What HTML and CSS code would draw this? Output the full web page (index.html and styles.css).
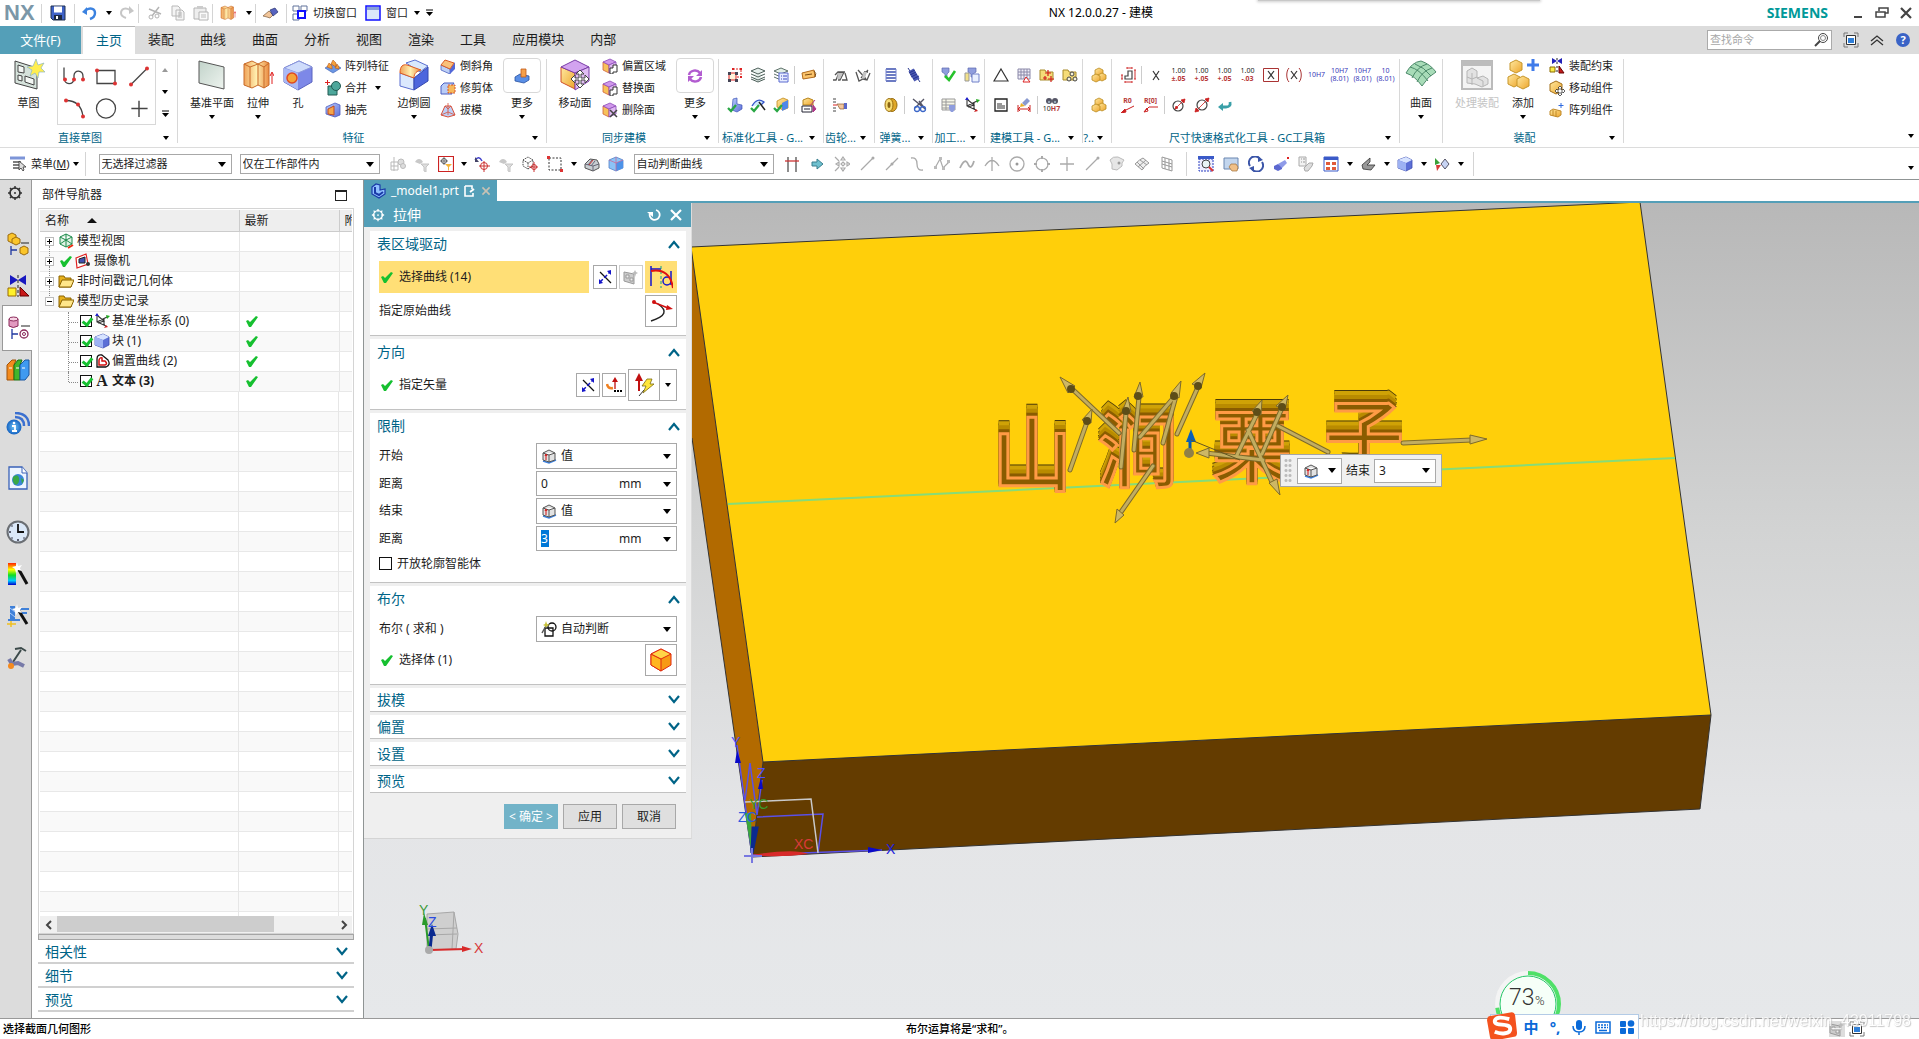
FILE: index.html
```html
<!DOCTYPE html>
<html lang="zh-CN">
<head>
<meta charset="utf-8">
<title>NX 12.0.0.27 - 建模</title>
<link rel="stylesheet" href="styles.css">
</head>
<body>
<svg class="sprite" aria-hidden="true">
<defs>
<linearGradient id="gBlue" x1="0" y1="0" x2="1" y2="1"><stop offset="0" stop-color="#b9cdfb"/><stop offset="1" stop-color="#5f6fd8"/></linearGradient>
<linearGradient id="gGold" x1="0" y1="0" x2="1" y2="1"><stop offset="0" stop-color="#ffe9a0"/><stop offset="1" stop-color="#eda52c"/></linearGradient>
<linearGradient id="gOr" x1="0" y1="0" x2="1" y2="0"><stop offset="0" stop-color="#f0a35a"/><stop offset=".5" stop-color="#fff0b0"/><stop offset="1" stop-color="#ea8a40"/></linearGradient>
<linearGradient id="gRain" x1="0" y1="0" x2="0" y2="1"><stop offset="0" stop-color="#f20"/><stop offset=".3" stop-color="#ff0"/><stop offset=".55" stop-color="#1d2"/><stop offset=".8" stop-color="#0cf"/><stop offset="1" stop-color="#00c"/></linearGradient>
<linearGradient id="gPlane" x1="0" y1="0" x2="1" y2="1"><stop offset="0" stop-color="#c2d3ca"/><stop offset="1" stop-color="#eef4ef"/></linearGradient>
<radialGradient id="gInfo"><stop offset="0" stop-color="#6fc4f5"/><stop offset="1" stop-color="#1563c2"/></radialGradient>
</defs>
<symbol id="save" viewBox="0 0 16 16"><path d="M1 1h14v14H3l-2-2z" fill="#3f62c8" stroke="#20304f"/><path d="M4 1.500h8v6H4z" fill="#fff"/><path d="M4 10h8v5H4z" fill="#1b2740"/><path d="M6 11h2v3H6z" fill="#fff"/></symbol>
<symbol id="undo" viewBox="0 0 16 16"><path d="M5 5c5-3 9-1 9 3 0 3-2 5-5 6" fill="none" stroke="#3b82e0" stroke-width="2.400"/><path d="M6 2v8L1 7z" fill="#3b82e0"/></symbol>
<symbol id="redo" viewBox="0 0 16 16"><path d="M11 5C6 2 2 4 2 8c0 3 2 4 5 5" fill="none" stroke="#c6c6c6" stroke-width="2"/><path d="M10 1v8l5-3z" fill="#c6c6c6"/></symbol>
<symbol id="cut" viewBox="0 0 16 16"><path d="M2 4l12 5M12 2L5 11" stroke="#b4b4b4" stroke-width="1.500" fill="none"/><circle cx="4" cy="12" r="2" fill="none" stroke="#b4b4b4"/><circle cx="10" cy="11" r="2" fill="none" stroke="#b4b4b4"/></symbol>
<symbol id="copy" viewBox="0 0 16 16"><path d="M2 1h6l2 2v8H2zM6 5h6l2 2v8H6z" fill="#f4f4f4" stroke="#b8b8b8"/><path d="M8 8h4M8 10h4M8 12h4" stroke="#b8b8b8"/></symbol>
<symbol id="paste" viewBox="0 0 16 16"><path d="M1 3h12v11H1z" fill="#eee" stroke="#b4b4b4"/><path d="M4 1h6v3H4z" fill="#ccc"/><path d="M6 7h9v8H6z" fill="#fafafa" stroke="#b4b4b4"/><path d="M8 10h5M8 12h5" stroke="#bbb"/></symbol>
<symbol id="extrude" viewBox="0 0 32 32"><path d="M2 5l8-3 6 3 6-3 5 2v22l-5 3-6-3-6 3-8-3z" fill="url(#gOr)" stroke="#c86a28"/><path d="M2 5l6 3 8-3 6 3 5-4M8 8v20M16 5v21M22 8v21" stroke="#c86a28" fill="none"/><path d="M30 25V14M28 17l2-4 2 4" stroke="#e02020" fill="none"/></symbol>
<symbol id="brush" viewBox="0 0 16 16"><path d="M0 11l6-5 4 4-3 3-3-1z" fill="#f2c69a" stroke="#7d5a3a" stroke-width=".7"/><path d="M7 5l5-2 3 4-5 4z" fill="#5763c0" stroke="#26306d" stroke-width=".7"/></symbol>
<symbol id="switchwin" viewBox="0 0 16 16"><path d="M1 1h6v5H1zM9 1h6v5H9zM1 9h6v6H1z" fill="#fff" stroke="#60739b"/><path d="M6 6h7v7H6z" fill="#fff" stroke="#1010ff" stroke-width="2"/></symbol>
<symbol id="win" viewBox="0 0 16 16"><path d="M1 1h14v14H1z" fill="#dce8fa" stroke="#1010ff" stroke-width="1.500"/><path d="M2 2h12v3H2z" fill="#88a0d8"/></symbol>
<symbol id="more" viewBox="0 0 9 8"><path d="M1 1h7" stroke="#000"/><path d="M1 3h7L4.500 7z"/></symbol>
<symbol id="mini" viewBox="0 0 14 14"><path d="M3 11h8" stroke="#444" stroke-width="2"/></symbol>
<symbol id="restore" viewBox="0 0 14 14"><path d="M4 5V2h9v5h-3" fill="none" stroke="#444" stroke-width="1.500"/><path d="M1 6h9v5H1z" fill="none" stroke="#444" stroke-width="1.500"/></symbol>
<symbol id="close" viewBox="0 0 14 14"><path d="M2 2l10 10M12 2L2 12" stroke="currentColor" stroke-width="2.200"/></symbol>
<symbol id="find" viewBox="0 0 16 16"><circle cx="10" cy="6" r="4.500" fill="#fff" stroke="#444"/><circle cx="10" cy="6" r="2.500" fill="none" stroke="#888"/><path d="M7 9l-5 5" stroke="#444" stroke-width="2"/></symbol>
<symbol id="full" viewBox="0 0 16 16"><path d="M1 5V1h4M11 1h4v4M15 11v4h-4M5 15H1v-4" fill="none" stroke="#777"/><path d="M3.500 3.500h9v9h-9z" fill="#fff" stroke="#333"/><path d="M5 6h6v5H5z" fill="#2f7fd8"/></symbol>
<symbol id="chev2" viewBox="0 0 16 16"><path d="M2 9l6-5 6 5M2 13l6-5 6 5" fill="none" stroke="#333" stroke-width="1.300"/></symbol>
<symbol id="sketch" viewBox="0 0 32 32"><path d="M2 2l22 7v21L2 24z" fill="#d5e2db" stroke="#444"/><path d="M5 6l6 2v6l-6-1zM5 16l4 1v5l-4-1zM12 17l9 3v6l-9-3z" fill="#f3f7f4" stroke="#444"/><path d="M23 0l2 6 6-2-3 5 4 4-6 0-1 6-3-5-5 3 2-6-5-3 6-1z" fill="#ffee50" stroke="#8db6c4" stroke-width=".7"/></symbol>
<symbol id="g1" viewBox="0 0 22 20"><path d="M1 1v10c0 8 10 8 10 1V9c0-6 9-6 9 1v3" fill="none" stroke="#444" stroke-width="1.300"/><circle cx="2" cy="13" r="2" fill="#d33"/><circle cx="11" cy="13" r="2" fill="#d33"/><circle cx="20" cy="13" r="2" fill="#d33"/></symbol>
<symbol id="g2" viewBox="0 0 22 20"><path d="M2 4h18v13H2z" fill="none" stroke="#444" stroke-width="1.300"/><circle cx="2" cy="4" r="2" fill="#d33"/><circle cx="20" cy="17" r="2" fill="#d33"/></symbol>
<symbol id="g3" viewBox="0 0 22 20"><path d="M3 18L19 2" stroke="#444" stroke-width="1.300"/><circle cx="3" cy="18" r="2" fill="#d33"/><circle cx="19" cy="2" r="2" fill="#d33"/></symbol>
<symbol id="g4" viewBox="0 0 22 20"><path d="M3 2q15 0 17 16" fill="none" stroke="#444" stroke-width="1.300"/><circle cx="3" cy="2" r="2" fill="#d33"/><circle cx="15" cy="6" r="2" fill="#d33"/><circle cx="20" cy="18" r="2" fill="#d33"/></symbol>
<symbol id="g5" viewBox="0 0 22 22"><circle cx="11" cy="11" r="10" fill="none" stroke="#444" stroke-width="1.300"/></symbol>
<symbol id="g6" viewBox="0 0 22 22"><path d="M11 3v17M3 11h17" stroke="#444" stroke-width="1.500"/></symbol>
<symbol id="plane" viewBox="0 0 32 32"><path d="M3 2l25 6v22L3 24z" fill="url(#gPlane)" stroke="#555"/></symbol>
<symbol id="hole" viewBox="0 0 32 32"><path d="M2 9l15-7 13 6v15l-14 8L2 23z" fill="#7d88e8" stroke="#5a64c0"/><path d="M2 9l15-7 13 6-14 6z" fill="#cfdcfb" stroke="#8a96dc"/><path d="M2 9l14 5v17L2 23z" fill="#aab9f5"/><circle cx="10" cy="19" r="5" fill="#f5a43a" stroke="#e04a20" stroke-width="1.500"/></symbol>
<symbol id="cube" viewBox="0 0 16 16"><path d="M1 4l8-3 6 3v8l-6 3-8-3z" fill="#5c6fd6" stroke="#3c4db0" stroke-width=".8"/><path d="M1 4l8-3 6 3-6 3z" fill="#d8e4ff"/><path d="M1 4l8 3v8l-8-3z" fill="#9db2f3"/></symbol>
<symbol id="pattern" viewBox="0 0 16 16"><path d="M0 10l8-5 8 5-8 5z" fill="#6b96e4" stroke="#3a5eb0" stroke-width=".6"/><path d="M2 9l2-4 3 3v3zM6 6l2-4 3 3v4zM10 10l2-4 2 3v2z" fill="#f5a03a" stroke="#b5581a" stroke-width=".6"/></symbol>
<symbol id="unite" viewBox="0 0 16 16"><path d="M3 6h9v9H3z" fill="#4da79b" stroke="#225a52"/><circle cx="11" cy="6" r="4.500" fill="#4da79b" stroke="#225a52"/><path d="M2.500 0v5M0 2.500h5" stroke="#d22"/></symbol>
<symbol id="shell" viewBox="0 0 16 16"><path d="M1 5l9-4 5 2v10l-5 2-9-3z" fill="url(#gBlue)" stroke="#4a5cc0" stroke-width=".8"/><path d="M3 7l6-3v9l-6-1z" fill="#f3a64a" stroke="#c24a1e"/></symbol>
<symbol id="blend" viewBox="0 0 32 32"><path d="M2 14l14 5v12L2 27z" fill="#dbe9fd" stroke="#5a6fd0"/><path d="M16 19l14-11v14l-14 9z" fill="#4d66dd" stroke="#3448ae"/><path d="M8 4l9-3 13 6-8 6z" fill="#d8e8fc" stroke="#5a6fd0"/><path d="M2 14c0-7 3-9 7-8l14 5c-4 1-7 3-7 8z" fill="url(#gOr)" stroke="#e05a20"/></symbol>
<symbol id="chamfer" viewBox="0 0 16 16"><path d="M1 7l9 4v5l-9-4z" fill="#bdd0f7" stroke="#4a5fc0" stroke-width=".8"/><path d="M10 11l5-7v7l-5 5z" fill="#5268d8"/><path d="M1 7l4-5 9 3-4 6z" fill="#f8c07a" stroke="#d85a28"/></symbol>
<symbol id="trim" viewBox="0 0 16 16"><path d="M1 6l3-3h10l-2 3v8H1z" fill="#b9ccf7" stroke="#4a5fc0"/><path d="M8 5h7v8H8z" fill="#f6b95c" stroke="#d8552a" stroke-dasharray="2 1"/></symbol>
<symbol id="draft" viewBox="0 0 16 16"><path d="M5 4h6l4 9-7 2-7-2z" fill="#bdd0f7" stroke="#d8503a"/><path d="M8 1v12M5 4l3 3 3-3M1 13l7-3 7 3" fill="none" stroke="#d8503a" stroke-width=".8"/></symbol>
<symbol id="stamp" viewBox="0 0 16 16"><path d="M1 9l5-3 9 2v4l-5 3-9-2z" fill="#5a8fe6" stroke="#27509f" stroke-width=".8"/><path d="M7 1h5v8H7z" fill="#f6a04a" stroke="#c25a1a" stroke-width=".8"/></symbol>
<symbol id="moveface" viewBox="0 0 32 32"><path d="M2 8l14 6v16L2 23z" fill="url(#gGold)" stroke="#d0502a"/><path d="M2 8l14-7 14 7-14 6z" fill="#d2a3ef" stroke="#7a3da8"/><path d="M16 14l14-6v14l-14 9z" fill="#e0bdf3" stroke="#7a3da8"/><path d="M21 11l4 4h-3v4h4v-3l4 4-4 4v-3h-4v4h3l-4 4-4-4h3v-4h-4v3l-4-4 4-4v3h4v-4h-3z" fill="#fff" stroke="#444"/></symbol>
<symbol id="face" viewBox="0 0 16 16"><path d="M1 4l6 3v8l-6-3z" fill="#f7c25a" stroke="#d0603a" stroke-width=".8"/><path d="M1 4l7-3 6 3-7 3z" fill="#cf97ea" stroke="#8b4ab8" stroke-width=".8"/><path d="M7 7l7-3v8l-7 3z" fill="#dfb8f2" stroke="#8b4ab8" stroke-width=".8"/><path d="M8 10h3V7h4v7h-4v2H8z" fill="#fff" stroke="#333"/></symbol>
<symbol id="delface" viewBox="0 0 16 16"><path d="M1 4l6 3v8l-6-3z" fill="#f7c25a" stroke="#d0603a" stroke-width=".8"/><path d="M1 4l7-3 6 3-7 3z" fill="#cf97ea" stroke="#8b4ab8" stroke-width=".8"/><path d="M7 7l7-3v8l-7 3z" fill="#dfb8f2" stroke="#8b4ab8" stroke-width=".8"/><path d="M8 8l7 7M15 8l-7 7" stroke="#444" stroke-width="1.500"/></symbol>
<symbol id="swap" viewBox="0 0 16 16"><path d="M2 7c1-5 8-6 11-2M14 9c-1 5-8 6-11 2" fill="none" stroke="#b25cd0" stroke-width="2.500"/><path d="M15 2v6H9zM1 14V8h6z" fill="#b25cd0"/></symbol>
<symbol id="attr" viewBox="0 0 16 16"><path d="M2 6h7v7H2z" fill="#fff3dc" stroke="#d22"/><path d="M6 2h8v8H9" fill="none" stroke="#d22" stroke-dasharray="2 1"/><path d="M1 5h3v3H1zM8 5h3v3H8zM1 12h3v3H1zM8 12h3v3H8z" fill="#445"/><path d="M5 1h2v2H5zM13 1h2v2h-2zM13 9h2v2h-2z" fill="#d22"/></symbol>
<symbol id="layers" viewBox="0 0 16 16"><path d="M1 4l7-3 7 3-7 3zM1 7l7 3 7-3M1 10l7 3 7-3M1 12l7 3 7-3" fill="#e6f0ec" stroke="#4d5f5a"/></symbol>
<symbol id="layerlist" viewBox="0 0 16 16"><path d="M1 4l7-3 7 3-7 3zM1 7l7 3M1 10l7 3" fill="#e2efe6" stroke="#5d706a"/><path d="M6 6h9v9H6z" fill="#e7edff" stroke="#5b6bd0"/><path d="M8 9h1M8 12h1M10 9h4M10 12h4" stroke="#3b4bc0"/></symbol>
<symbol id="tag" viewBox="0 0 16 16"><path d="M1 6l12-3 1 7-12 2z" fill="#fbc36a" stroke="#b06a1c"/><path d="M4 8l7-1M13 4q3 2 1 6" stroke="#7a4a10" fill="none"/></symbol>
<symbol id="partok" viewBox="0 0 16 16"><path d="M6 2l4-1v6l5 1v4l-5 3-5-2z" fill="url(#gBlue)" stroke="#3e55b8" stroke-width=".7"/><path d="M1 11l3 3 5-6" fill="none" stroke="#29a745" stroke-width="2.300"/></symbol>
<symbol id="curveok" viewBox="0 0 16 16"><path d="M2 9q5-9 12-4l-3 3" fill="#cfe9ff" stroke="#3656c8" stroke-width="1.300"/><path d="M9 5l6 8" stroke="#222" stroke-width="1.500"/><path d="M1 11l3 3 5-6" fill="none" stroke="#29a745" stroke-width="2.300"/></symbol>
<symbol id="goldok" viewBox="0 0 16 16"><path d="M4 4l6-3 5 2v8l-5 2-6-3z" fill="url(#gGold)" stroke="#c08a1c" stroke-width=".8"/><path d="M9 6l6-3v8l-6 3z" fill="#4f86e8"/><path d="M1 11l3 3 5-6" fill="none" stroke="#29a745" stroke-width="2.300"/></symbol>
<symbol id="goldpen" viewBox="0 0 16 16"><path d="M2 3l5-2 5 2v5H2z" fill="url(#gGold)" stroke="#b8841a"/><path d="M1 9h10v6H1z" fill="#fff" stroke="#223"/><path d="M3 12h6" stroke="#223"/><path d="M14 3L9 9M12 8l3 4-3 3z" stroke="#b0388a" fill="#b0388a"/></symbol>
<symbol id="gear2" viewBox="0 0 16 16"><path d="M1 13h3l3-7h5M6 13h2l4-8M3 8l3-3h7M10 13h5l-2-7" fill="none" stroke="#555" stroke-width="1.300"/><path d="M6 6h5l-3 6H5z" fill="#c4c4c4"/></symbol>
<symbol id="gear3" viewBox="0 0 16 16"><path d="M1 5l3 9 4-2 4 1 3-7M3 3l8 9M13 3l-7 8M9 5h4" fill="none" stroke="#555" stroke-width="1.300"/><path d="M8 5h4l-2 6H7z" fill="#c4c4c4"/></symbol>
<symbol id="gearhand" viewBox="0 0 16 16"><path d="M1 2h3M1 5h3M1 11h3M1 14h3" stroke="#444"/><path d="M1 8h4" stroke="#d22"/><path d="M5 7h7v5H8z" fill="#f3c79c" stroke="#8a5a34" stroke-width=".7"/><path d="M12 6h3v6h-3z" fill="#5b68c8"/></symbol>
<symbol id="coil" viewBox="0 0 16 16"><path d="M3 2h10M3 5h10M3 8h10M3 11h10M3 14h10" stroke="#3c50b0" stroke-width="1.700"/><path d="M3 2v12M13 2v12" stroke="#7a88d0"/></symbol>
<symbol id="coil2" viewBox="0 0 16 16"><path d="M5 3l6 10" stroke="#4a58b4" stroke-width="6"/><path d="M3 6l6-3M4 8l6-3M5 10l6-3M7 12l6-3" stroke="#27358c"/><path d="M2 1l2 3M12 12l2 3" stroke="#27358c"/></symbol>
<symbol id="bobbin" viewBox="0 0 16 16"><ellipse cx="9" cy="8" rx="5" ry="6.500" fill="#e0a92a" stroke="#9a6e10"/><ellipse cx="6" cy="8" rx="4" ry="6.500" fill="#f7dc72" stroke="#9a6e10"/><ellipse cx="6" cy="8" rx="1.500" ry="3" fill="#8a6412"/></symbol>
<symbol id="springcut" viewBox="0 0 16 16"><path d="M2 2l11 9M13 2L4 11M8 4l6 8" stroke="#556" stroke-width="1.400"/><circle cx="12" cy="12" r="2.500" fill="none" stroke="#3a66c8" stroke-width="1.300"/><circle cx="6" cy="12" r="2.500" fill="none" stroke="#3a66c8" stroke-width="1.300"/></symbol>
<symbol id="toolok" viewBox="0 0 16 16"><path d="M1 1h7v4L6 7v3H4V7L1 5z" fill="#8f9ddd" stroke="#5b67b0" stroke-width=".7"/><path d="M4 9l4 4 6-9" fill="none" stroke="#27c22c" stroke-width="2.600"/></symbol>
<symbol id="tooldoc" viewBox="0 0 16 16"><path d="M4 1h8v4l-3 2v3H7V7L4 5z" fill="#8f9ddd" stroke="#5b67b0" stroke-width=".7"/><path d="M8 7h7v8H8z" fill="#eaf0ff" stroke="#7080c8"/><path d="M1 6h4v8H1z" fill="#f3e28a" stroke="#999"/></symbol>
<symbol id="tablex" viewBox="0 0 16 16"><path d="M1 2h13v11H1zM1 5h13M1 8h13M1 11h13M5 2v11" fill="#f6f6e8" stroke="#999"/><path d="M8 8h6v4l-2 3h-2l-2-3z" fill="#8f9ddd"/></symbol>
<symbol id="csys" viewBox="0 0 16 16"><path d="M3 1v8l9 4M3 9l10-5M4 3l6 5-6 2M10 5v7" fill="none" stroke="#333" stroke-width="1.100"/><path d="M1 3l2-3 2 3z" fill="#22c"/><path d="M12 2l4 1-3 3z" fill="#2a2"/><path d="M10 15l4-1-2-2z" fill="#c22"/></symbol>
<symbol id="tri" viewBox="0 0 16 16"><path d="M8 2l7 12H1z" fill="none" stroke="#333" stroke-width="1.200"/></symbol>
<symbol id="tabletri" viewBox="0 0 16 16"><path d="M2 2h12v10H2zM2 5h12M2 8h12M5 2v10M8 2v10M11 2v10" fill="#f0eff8" stroke="#8a88a8"/><path d="M10 10l4 5H7z" fill="#fff" stroke="#d22"/></symbol>
<symbol id="foldplus" viewBox="0 0 16 16"><path d="M1 3h5l1 2h7v8H1z" fill="#f5dc78" stroke="#a88a2a"/><path d="M9 3v6M6 6h6M12 9v6M9 12h6M6 9v4M4 11h4" stroke="#d32020" stroke-width="1.200"/></symbol>
<symbol id="foldring" viewBox="0 0 16 16"><path d="M1 3h5l1 2h7v8H1z" fill="#f5dc78" stroke="#a88a2a"/><g fill="#f5f1d8" stroke="#444"><circle cx="10" cy="7" r="2"/><circle cx="7" cy="12" r="2"/><circle cx="13" cy="12" r="2"/></g></symbol>
<symbol id="doclines" viewBox="0 0 16 16"><path d="M2 2h12v12H2z" fill="#fff" stroke="#222" stroke-width="1.300"/><path d="M4 7h5M4 9h8M4 11h8" stroke="#333"/></symbol>
<symbol id="dimbrush" viewBox="0 0 16 16"><path d="M2 8V15M14 8v7M2 12h12M4 10l-2 2 2 2M12 10l2 2-2 2" stroke="#c22" fill="none"/><path d="M6 6l5-5 3 3-5 5z" fill="#8a9ad0"/><path d="M5 6l4 3-5 1z" fill="#e8b02a"/></symbol>
<symbol id="golds" viewBox="0 0 16 16"><g fill="url(#gGold)" stroke="#b98a20" stroke-width=".8"><path d="M4 3l4-2 4 2v5H4z"/><path d="M7 8l4-2 4 2v4l-4 2-4-2z"/><path d="M1 9l4-2 4 2v4l-4 2-4-2z"/></g></symbol>
<symbol id="dimstep" viewBox="0 0 16 16"><path d="M5 12V9h3V4h4v8z" fill="none" stroke="#444" stroke-width="1.200"/><path d="M2 8v4M1 8h2M1 12h2M15 3v9M14 3h2M14 12h2M5 15h7M5 14v2M12 14v2M7 1h5M7 0v2M12 0v2" stroke="#d03030"/></symbol>
<symbol id="xx" viewBox="0 0 16 16"><path d="M5 4l6 9M11 4l-6 9" stroke="#333" stroke-width="1.200"/></symbol>
<symbol id="xbox" viewBox="0 0 16 16"><path d="M.5 1.500h15v13H.5z" fill="none" stroke="#a33"/><path d="M5 4l6 8M11 4l-6 8" stroke="#333" stroke-width="1.200"/></symbol>
<symbol id="xpar" viewBox="0 0 16 16"><path d="M3 1C0 4 0 12 3 15M13 1c3 3 3 11 0 14" fill="none" stroke="#a33"/><path d="M5 4l6 8M11 4l-6 8" stroke="#333" stroke-width="1.200"/></symbol>
<symbol id="dia" viewBox="0 0 16 16"><circle cx="7" cy="9" r="5" fill="none" stroke="#444" stroke-width="1.200"/><path d="M4 12L14 2M14 2l-4 1 3 3zM4 12l1-3 2 2z" stroke="#c22" stroke-width=".8" fill="#c22"/></symbol>
<symbol id="dia2" viewBox="0 0 16 16"><circle cx="8" cy="8" r="5" fill="none" stroke="#444" stroke-width="1.200"/><path d="M1 15L15 1M15 1l-4 1 3 3zM1 15l1-4 3 3z" stroke="#c22" stroke-width=".8" fill="#c22"/></symbol>
<symbol id="ret" viewBox="0 0 16 16"><path d="M13 5q1 5-4 5H5" fill="none" stroke="#3aa0a8" stroke-width="2.800"/><path d="M6 6v8L1 10z" fill="#3aa0a8"/></symbol>
<symbol id="surface" viewBox="0 0 32 32"><path d="M1 14Q7 3 16 2q9 3 15 11-8 4-14 14Q10 17 1 14z" fill="#a8dcb8" stroke="#4c8a6a"/><path d="M5 8q9 2 18 14M10 5q9 3 16 12M7 19Q12 8 22 5M12 23Q17 12 27 9" fill="none" stroke="#4c8a6a"/></symbol>
<symbol id="procasm" viewBox="0 0 32 32"><path d="M1 2h30v28H1z" fill="#f4f4f4" stroke="#bbb" stroke-width="2"/><path d="M1 2h30v5H1z" fill="#bdbdbd"/><path d="M6 12l5-3 5 3v7l6-2 5 3v5l-6 3-7-3-8-1z" fill="#e2e2e2" stroke="#b5b5b5"/><path d="M6 18l5 2 5-2M11 14v12M16 19l6 3v5" fill="none" stroke="#b5b5b5"/></symbol>
<symbol id="add" viewBox="0 0 32 32"><g fill="url(#gGold)" stroke="#c7962a"><path d="M3 4l6-3 6 3v7l-6 3-6-3z"/><path d="M1 18l6-3 6 3v7l-6 3-6-3z"/><path d="M10 20l6-3 6 3v7l-6 3-6-3z"/></g><path d="M26 0v12M20 6h12" stroke="#3f7bea" stroke-width="3"/></symbol>
<symbol id="constrain" viewBox="0 0 16 16"><path d="M3 0l5 3-5 3zM13 0L8 3l5 3z" fill="#2222b8"/><path d="M8 0v16" stroke="#222" stroke-dasharray="2 2"/><path d="M1 9h5v5H1z" fill="#f8ec4a" stroke="#8a6a00"/><path d="M10 8l5 7h-5z" fill="#c41c1c" stroke="#600"/></symbol>
<symbol id="movecomp" viewBox="0 0 16 16"><path d="M1 4l6-3 6 3v7l-6 3-6-3z" fill="url(#gGold)" stroke="#a5701a"/><path d="M11 6l2 2h-1v2h2V9l2 2-2 2v-1h-2v2h1l-2 2-2-2h1v-2H8v1l-2-2 2-2v1h2V8H9z" fill="#fff" stroke="#222" stroke-width=".7"/></symbol>
<symbol id="patcomp" viewBox="0 0 16 16"><path d="M1 9l3-2 8 2v4l-3 2-8-2z" fill="url(#gGold)" stroke="#c08a2a"/><path d="M4 8v6M7 9v6" stroke="#c08a2a"/><path d="M12 1v5M9.500 3.500h5" stroke="#2f6ae0"/></symbol>
<symbol id="menu" viewBox="0 0 16 16"><path d="M0 2h15" stroke="#7d95d8" stroke-width="3"/><path d="M3 6h8M3 9h7M3 12h7" stroke="#555" stroke-width="1.500"/><path d="M9 5v9l2-2 2 3 1-1-1-3h3z" fill="#ddd" stroke="#333" stroke-width=".8"/></symbol>
<symbol id="asmgray" viewBox="0 0 16 16"><path d="M1 6h7v8H1zM4 1v14M1 10h7" fill="none" stroke="#b9b9b9"/><circle cx="11" cy="6" r="3" fill="#ddd" stroke="#bbb"/><circle cx="13" cy="10" r="2.500" fill="#ddd" stroke="#bbb"/></symbol>
<symbol id="filtgray" viewBox="0 0 16 16"><path d="M1 6c2-4 6-4 8 0l-3 2z" fill="#c8c8c8"/><path d="M7 8h8l-3 3v5l-2-1v-4z" fill="#ddd" stroke="#c4c4c4"/></symbol>
<symbol id="filtred" viewBox="0 0 16 16"><path d="M.5.5h15v15H.5z" fill="#fff" stroke="#c22" stroke-width="1.200"/><circle cx="6" cy="5" r="2.500" fill="none" stroke="#555"/><path d="M6 1v8M2 5h8" stroke="#555" stroke-width=".8"/><path d="M7 8h7l-3 3v4l-1-1v-3z" fill="#f6b53a"/></symbol>
<symbol id="target" viewBox="0 0 16 16"><path d="M1 4q4-5 7 1" fill="none" stroke="#44c" stroke-width="1.500"/><path d="M1 1v5h4z" fill="#446"/><circle cx="10" cy="10" r="3.500" fill="none" stroke="#c33"/><path d="M10 5v11M5 10h11" stroke="#c33"/></symbol>
<symbol id="cubered" viewBox="0 0 16 16"><path d="M1 4l5-3 5 3v6l-5 3-5-3zM1 4l5 3 5-3M6 7v6" fill="none" stroke="#444" stroke-dasharray="1.500 1"/><circle cx="12" cy="11" r="2.500" fill="none" stroke="#c33"/><path d="M12 6v10M7 11h9" stroke="#c33"/></symbol>
<symbol id="dashbox" viewBox="0 0 16 16"><path d="M2 2h12v12H2z" fill="none" stroke="#333" stroke-dasharray="2 1.500"/><path d="M0 0h3v3H0zM13 13h3v3h-3z" fill="#d33"/></symbol>
<symbol id="shade" viewBox="0 0 16 16"><path d="M1 8l5-5 7 1 2 4v4l-6 3-8-3z" fill="#c9ced2" stroke="#555"/><path d="M1 8l8 2 6-2M9 10v5M4 9l4-5M7 10l4-5" fill="none" stroke="#667"/><path d="M5 9l4-5" stroke="#c33"/></symbol>
<symbol id="cubeblue" viewBox="0 0 16 16"><path d="M1 4l7-3 7 3v8l-7 3-7-3z" fill="#8cc3f7" stroke="#5580c8" stroke-width=".8"/><path d="M8 7l7-3v8l-7 3z" fill="#4d92e8"/><path d="M1 4l7 3 7-3M8 1v14" fill="none" stroke="#c86a9a" stroke-width=".8"/></symbol>
<symbol id="hash" viewBox="0 0 16 16"><path d="M4 1v15M12 1v15" stroke="#444" stroke-width="1.200"/><path d="M1 5h14" stroke="#c33" stroke-width="1.300"/></symbol>
<symbol id="arrowr" viewBox="0 0 16 16"><path d="M3 6h5V3l6 5-6 5v-3H3z" fill="#6fc0cf" stroke="#3a7f8e"/></symbol>
<symbol id="s1" viewBox="0 0 16 16"><path d="M1 1l4 4M1 15l4-4M9 1l2 3H7zM9 15l2-3H7zM2 8l3-2v4zM16 8l-3-2v4zM9 6l2 2-2 2-2-2z" fill="none" stroke="#aaa" stroke-width="1.200"/></symbol>
<symbol id="s2" viewBox="0 0 16 16"><path d="M2 14L14 2" stroke="#aaa" stroke-width="1.200"/><circle cx="14" cy="2" r="1.500" fill="#aaa"/></symbol>
<symbol id="s3" viewBox="0 0 16 16"><path d="M2 14L14 2" stroke="#aaa" stroke-width="1.200"/><circle cx="8" cy="8" r="1.500" fill="#aaa"/></symbol>
<symbol id="s4" viewBox="0 0 16 16"><path d="M2 2q6-1 6 6t6 6" fill="none" stroke="#aaa" stroke-width="1.300"/></symbol>
<symbol id="s5" viewBox="0 0 16 16"><path d="M1 12L6 3l3 9 6-6" fill="none" stroke="#aaa" stroke-width="1.200"/><path d="M0 10h3v3H0zM5 1h3v3H5zM8 11h3v3H8zM13 4h3v3h-3z" fill="#bbb"/></symbol>
<symbol id="s6" viewBox="0 0 16 16"><path d="M1 12Q6 1 9 8t6-3" fill="none" stroke="#aaa" stroke-width="1.800"/></symbol>
<symbol id="s7" viewBox="0 0 16 16"><path d="M1 10Q8-1 15 10M8 1v14" fill="none" stroke="#aaa" stroke-width="1.300"/></symbol>
<symbol id="s8" viewBox="0 0 16 16"><circle cx="8" cy="8" r="7" fill="none" stroke="#aaa" stroke-width="1.300"/><circle cx="8" cy="8" r="1.500" fill="#999"/></symbol>
<symbol id="s9" viewBox="0 0 16 16"><circle cx="8" cy="8" r="6" fill="none" stroke="#aaa" stroke-width="1.200"/><path d="M7 0h2v3H7zM7 13h2v3H7zM0 7h3v2H0zM13 7h3v2h-3z" fill="#aaa"/></symbol>
<symbol id="s10" viewBox="0 0 16 16"><path d="M8 1v14M1 8h14" stroke="#aaa" stroke-width="1.300"/></symbol>
<symbol id="s12" viewBox="0 0 16 16"><path d="M1 4q3-4 8-3l6 3q-3 3-2 6l-5 4-5-1V8z" fill="#e6e6e6" stroke="#bbb"/><circle cx="10" cy="7" r="1.500" fill="#999"/></symbol>
<symbol id="s13" viewBox="0 0 16 16"><path d="M1 8q5-5 8-6l6 5q-4 2-7 7zM3 6l7 7M6 4l7 5M4 11l8-7" fill="#eee" stroke="#999"/></symbol>
<symbol id="s14" viewBox="0 0 16 16"><path d="M3 1l10 3v11L3 12zM3 5l10 3M3 8l10 3M6 2v11M10 3v11" fill="none" stroke="#999"/></symbol>
<symbol id="zoomwin" viewBox="0 0 16 16"><path d="M1 3h14v12H1z" fill="#eef" stroke="#2a3fc0" stroke-dasharray="2 1"/><path d="M0 0h16v3H0z" fill="#3a5ac8"/><circle cx="8" cy="8" r="4" fill="#e8f4f4" stroke="#444"/><path d="M11 11l4 4" stroke="#d33" stroke-width="2"/></symbol>
<symbol id="pan" viewBox="0 0 16 16"><path d="M1 2h14v11H1z" fill="#c3d6ee" stroke="#6a86b0"/><path d="M8 8l5 0 2 3-1 4H9l-3-4z" fill="#f0c088" stroke="#a0703a" stroke-width=".7"/></symbol>
<symbol id="rotate" viewBox="0 0 16 16"><path d="M2 10A6 6 0 0 1 12 3M14 6a6 6 0 0 1-10 7" fill="none" stroke="#3b55a8" stroke-width="2"/><path d="M10 0l5 4-5 2zM6 10l-5 2 5 4z" fill="#3b55a8"/></symbol>
<symbol id="persp" viewBox="0 0 16 16"><path d="M1 10l4-2 4 2v3l-4 2-4-2z" fill="#5c68d0"/><path d="M5 8l7-4 2 3-5 5z" fill="#8f9be8"/><path d="M15 1v2" stroke="#d22" stroke-width="2"/></symbol>
<symbol id="graytree" viewBox="0 0 16 16"><path d="M1 1h7v9H1z" fill="#f2f2f2" stroke="#aaa"/><path d="M3 3h1M3 6h1M5 3h2M5 6h2" stroke="#999"/><path d="M6 12l5-5 4 0-1 3-4 5H7z" fill="#ddd" stroke="#aaa"/></symbol>
<symbol id="wingrid" viewBox="0 0 16 16"><path d="M1 1h14v14H1z" fill="#fff" stroke="#3a5ac8"/><path d="M1 1h14v3H1z" fill="#3a5ac8"/><path d="M3 6h4v3H3zM9 6h4v3H9zM3 11h4v3H3zM9 11h4v3H9z" fill="#e05a3a"/></symbol>
<symbol id="section" viewBox="0 0 16 16"><path d="M2 9l8-7v4l-3 3h8l-4 5-8-1z" fill="#999" stroke="#333" stroke-width=".8"/></symbol>
<symbol id="pointer3" viewBox="0 0 16 16"><path d="M1 2l5 5-5 2z" fill="#3aa03a"/><path d="M2 9l5 0-4 6z" fill="#d83a3a"/><path d="M7 8l4-5 4 5-4 5z" fill="#c8d4f4" stroke="#556"/></symbol>
<symbol id="gear" viewBox="0 0 16 16"><circle cx="8" cy="8" r="5" fill="none" stroke="currentColor" stroke-width="1.700"/><circle cx="8" cy="8" r="1" fill="currentColor"/><path d="M8 1v3M8 12v3M1 8h3M12 8h3M3 3l2 2M11 11l2 2M13 3l-2 2M3 13l2-2" stroke="currentColor" stroke-width="1.500"/></symbol>
<symbol id="r1" viewBox="0 0 24 24"><g fill="#fbc52a" stroke="#9a6a10"><path d="M2 3l4-2 4 2v6l-4 2-4-2z"/><path d="M6 7l4-2 4 2v4l-4 2-4-2z"/><path d="M14 16l4-2 4 2v5l-4 2-4-2z"/></g><path d="M15 11h8" stroke="#222"/><path d="M5 14v9M5 18h6" stroke="#2038a0" stroke-width="1.300"/></symbol>
<symbol id="r2" viewBox="0 0 24 24"><path d="M4 1l8 5-8 5zM20 1l-8 5 8 5z" fill="#1818c0"/><path d="M12 1v22" stroke="#222" stroke-dasharray="3 2"/><path d="M2 14h8v8H2z" fill="#fff12a" stroke="#9a6a00"/><path d="M14 13l9 9h-9z" fill="#c81818" stroke="#600"/></symbol>
<symbol id="r3" viewBox="0 0 24 24"><path d="M2 3v7q4 3 9 0V3" fill="#e29ac0" stroke="#8a2a5a"/><ellipse cx="6.500" cy="3" rx="4.500" ry="2" fill="#f7d2e4" stroke="#8a2a5a"/><path d="M14 10h9" stroke="#222"/><path d="M5 13v10M5 18h6" stroke="#2038a0" stroke-width="1.300"/><circle cx="17" cy="18" r="4" fill="none" stroke="#8a2a5a" stroke-width="1.300"/><circle cx="17" cy="18" r="1.500" fill="none" stroke="#8a2a5a"/></symbol>
<symbol id="r4" viewBox="0 0 24 24"><path d="M1 7l5-5h4L8 7v15H1z" fill="#f38b1e" stroke="#a0520a"/><path d="M8 7l4-5h4l-2 5v15H8z" fill="#42b52c" stroke="#1f7010"/><path d="M14 7l5-5h4v15l-4 5h-5z" fill="#3f9af0" stroke="#1a57a0"/><path d="M3 10h3M10 10h3M16 10h3" stroke="#fff"/></symbol>
<symbol id="r5" viewBox="0 0 24 24"><circle cx="8" cy="15" r="7.500" fill="url(#gInfo)"/><circle cx="8" cy="11" r="1.300" fill="#fff"/><path d="M6 14h3v5M6 19h5" fill="none" stroke="#fff" stroke-width="1.800"/><path d="M9 5q9 0 9 9M9 1q14 0 14 13" fill="none" stroke="#3b70d0" stroke-width="2.500"/></symbol>
<symbol id="r6" viewBox="0 0 24 24"><path d="M3 1h13l5 6v16H3z" fill="#eef5ff" stroke="#3a62b8" stroke-width="1.300"/><path d="M16 1v6h5" fill="#fff" stroke="#3a62b8"/><circle cx="12" cy="14" r="6" fill="#3a86d8"/><path d="M7 11q5-4 6 1t-3 7q-4-2-3-8zM15 12l3 2-2 4z" fill="#39a845"/></symbol>
<symbol id="r7" viewBox="0 0 24 24"><circle cx="12" cy="12" r="10.500" fill="#dbe8f8" stroke="#6b6f74" stroke-width="2"/><path d="M12 4v8h6" fill="none" stroke="#111" stroke-width="1.800"/><g fill="#334"><circle cx="12" cy="20" r="1"/><circle cx="4" cy="12" r="1"/><circle cx="6" cy="6" r=".8"/><circle cx="18" cy="18" r=".8"/><circle cx="6" cy="18" r=".8"/></g></symbol>
<symbol id="r8" viewBox="0 0 24 24"><path d="M2 1h8v22H2z" fill="url(#gRain)"/><path d="M12 6l9 16" stroke="#111" stroke-width="3"/><path d="M11 0l1 4 4-1-2 3 2 3-4-1-2 3-1-4-3-2 4-1z" fill="#fff"/></symbol>
<symbol id="r9" viewBox="0 0 24 24"><path d="M4 2h5v15H4z" fill="#3f80d8"/><path d="M4 4l5 4M4 9l5 4" stroke="#aaccff"/><path d="M13 5h10M13 9h8M2 16h12" stroke="#3f80d8" stroke-width="2"/><path d="M1 20h9M5 17v6" stroke="#f0c020" stroke-width="1.500"/><path d="M13 7l8 13" stroke="#111" stroke-width="3"/><path d="M11 0l1 4 4-1-2 3 2 3-4-1-2 3-1-4-3-2 4-1z" fill="#fff"/></symbol>
<symbol id="r10" viewBox="0 0 24 24"><path d="M7 16L15 4M9 3l6-1 5 3" fill="none" stroke="#3c4a4a" stroke-width="2"/><path d="M3 13l3 5 6-1 6 3" stroke="#777aa8" stroke-width="4" fill="none"/><circle cx="5" cy="20" r="3" fill="#f58a1e"/></symbol>
<symbol id="check" viewBox="0 0 12 12"><path d="M0 6l2-1 2 2 6-6 2 1-7 10-2 0z" fill="#16c030"/></symbol>
<symbol id="folder" viewBox="0 0 16 16"><path d="M1 3h5l1 2h6v9H1z" fill="#e8b21e" stroke="#8a6200"/><path d="M1 14l3-7h12l-3 7z" fill="#ffe68a" stroke="#8a6200"/></symbol>
<symbol id="views" viewBox="0 0 16 16"><path d="M2 4l6-3 6 3v7l-6 3-6-3zM2 4l6 3 6-3M8 1v13M2 11l6-4 6 4" fill="#dff3e4" stroke="#1c8a4a"/><path d="M10 15l5-3" stroke="#f02a10" stroke-width="2"/></symbol>
<symbol id="camera" viewBox="0 0 16 16"><path d="M1 5l10-4 2 10-11 4z" fill="#fff" stroke="#e02020" stroke-width="1.200"/><path d="M4 6l6-2v6H4z" fill="#4050b0" stroke="#222"/><circle cx="13" cy="11" r="2" fill="#333"/></symbol>
<symbol id="offset" viewBox="0 0 16 16"><path d="M3 14V6q0-5 5-4l6 5q3 5-2 7z" fill="#fff" stroke="#111" stroke-width="1.300"/><path d="M5 12V7q1-3 3-2v3h3q3 3 0 4z" fill="#fff" stroke="#d01010" stroke-width="1.500"/></symbol>
<symbol id="part" viewBox="0 0 16 16"><path d="M2 4l4-3 4 1v5l5-1v5l-6 4-7-4z" fill="#8fc0ff" stroke="#1a3aa8" stroke-width="1.200"/><path d="M5 4v6l4 2 4-3" fill="none" stroke="#1a3aa8" stroke-width="2"/></symbol>
<symbol id="edit" viewBox="0 0 12 12"><path d="M1 1h7v3M1 1v10h8V8" fill="none" stroke="#fff" stroke-width="1.600"/><path d="M6 7l4-3" stroke="#fff" stroke-width="2"/></symbol>
<symbol id="reset" viewBox="0 0 14 14"><path d="M3 5a5 5 0 1 0 6-3" fill="none" stroke="#fff" stroke-width="1.800"/><path d="M0 4h6v5z" fill="#fff"/></symbol>
<symbol id="rev" viewBox="0 0 16 16"><path d="M3 3l11 11" stroke="#111" stroke-width="1.300"/><path d="M3 13L13 3" stroke="#1414c8" stroke-dasharray="4 2" stroke-width="1.500"/><path d="M14 1v5l-4-4zM2 15v-5l4 4z" fill="#1414c8"/></symbol>
<symbol id="sketchg" viewBox="0 0 16 16"><path d="M1 3l10 2v10L1 12z" fill="#ccc" stroke="#999"/><path d="M3 6h3v3H3zM7 9h3v3H7z" fill="#eee" stroke="#999"/><path d="M12 1l1 2 2 1-2 1-1 3-1-3-2-1 2-1z" fill="#bbb"/></symbol>
<symbol id="rule" viewBox="0 0 24 24"><path d="M2 1v20M2 4h10M22 6v14" stroke="#1414d0" stroke-width="1.500"/><path d="M12 1v22" stroke="#12a088" stroke-dasharray="3 2"/><circle cx="18" cy="16" r="4" fill="none" stroke="#1414d0" stroke-width="1.500"/><path d="M2 6q19-3 22 17" fill="none" stroke="#e01010" stroke-width="2"/></symbol>
<symbol id="orig" viewBox="0 0 24 24"><path d="M9 5q15 10-7 17" fill="none" stroke="#222" stroke-width="1.500"/><path d="M4 3l15 6" stroke="#d01010" stroke-width="1.500"/><circle cx="5" cy="3" r="2" fill="#d01010"/><path d="M18 6l6 4-7 1z" fill="#d01010"/></symbol>
<symbol id="vecdlg" viewBox="0 0 16 16"><path d="M9 12V3" stroke="#c01010" stroke-width="1.300"/><path d="M9 0l3 5H6z" fill="#c01010"/><path d="M1 7q1 5 6 4" stroke="#f08020" stroke-width="2.500" fill="none"/><path d="M8 14h2M11 14h2M14 14h2" stroke="#000" stroke-width="2"/></symbol>
<symbol id="vec" viewBox="0 0 24 24"><path d="M7 18V6" stroke="#c01010" stroke-width="2"/><path d="M7 0l4 8H3z" fill="#c01010"/><path d="M7 23l5-6" stroke="#333"/><path d="M15 6h5l-2 5h4L11 20l3-7h-4z" fill="#ffe63a" stroke="#7a6a10" stroke-width=".8"/></symbol>
<symbol id="val" viewBox="0 0 16 16"><path d="M2 13l6 2 7-3" fill="none" stroke="#3a80e0" stroke-width="1.500"/><path d="M2 5l6-3 6 3v7l-6 2-6-2zM2 5l6 2 6-2M8 7v7" fill="#e2e2e2" stroke="#555"/><path d="M5 12V7M4 8l1-2 1 2" fill="none" stroke="#d01010"/></symbol>
<symbol id="bool" viewBox="0 0 16 16"><circle cx="11" cy="6" r="4" fill="#fff" stroke="#111" stroke-width="1.300"/><path d="M4 7h8v8H4z" fill="none" stroke="#111" stroke-width="1.300"/><path d="M1 12L6 3" stroke="#555" stroke-width="1.500"/><path d="M5 0l1 3 3 1-3 1-1 2-1-2-2-1 2-1z" fill="#c8c23a"/></symbol>
<symbol id="body" viewBox="0 0 24 24"><path d="M2 6l10-5 10 5v11l-10 6-10-6z" fill="#f79a14" stroke="#e02810"/><path d="M2 6l10 5v12L2 17z" fill="#ffb520" stroke="#e02810"/><path d="M2 6l10-5 10 5-10 5z" fill="#ffd648" stroke="#e02810"/></symbol>
<symbol id="chu" viewBox="0 0 12 10"><path d="M1 9l5-6 5 6" fill="none" stroke="#006487" stroke-width="2.200"/></symbol>
<symbol id="chd" viewBox="0 0 12 10"><path d="M1 1l5 6 5-6" fill="none" stroke="#006487" stroke-width="2.200"/></symbol>
</svg>

<header class="titlebar">
  <span class="logo">NX</span><i class="vs"></i>
  <button class="tb w32" aria-label="保存"><svg class="i16"><use href="#save"/></svg></button><i class="vs"></i>
  <button class="tb w28" aria-label="撤销"><svg class="i16"><use href="#undo"/></svg></button><button class="dd" aria-label="撤销列表"></button>
  <button class="tb w23" aria-label="重做"><svg class="i16"><use href="#redo"/></svg></button><i class="vs"></i>
  <button class="tb w23 ml" aria-label="剪切"><svg class="i16"><use href="#cut"/></svg></button><button class="tb w23" aria-label="复制"><svg class="i16"><use href="#copy"/></svg></button><button class="tb w23" aria-label="粘贴"><svg class="i16"><use href="#paste"/></svg></button><i class="vs"></i>
  <button class="tb w30" aria-label="拉伸"><svg class="i16"><use href="#extrude"/></svg></button><button class="dd" aria-label="更多命令"></button><i class="vs"></i>
  <button class="tb w30" aria-label="触控"><svg class="i16"><use href="#brush"/></svg></button><i class="vs"></i>
  <button class="tb txt"><svg class="i16"><use href="#switchwin"/></svg>切换窗口</button>
  <button class="tb txt"><svg class="i16"><use href="#win"/></svg>窗口</button><button class="dd" aria-label="窗口列表"></button>
  <button class="dd" aria-label="自定义"><svg class="more"><use href="#more"/></svg></button>
  <h1>NX 12.0.0.27 - 建模</h1>
  <span class="brand">SIEMENS</span>
  <button class="tb w24" aria-label="最小化"><svg class="i14"><use href="#mini"/></svg></button><button class="tb w24" aria-label="还原"><svg class="i14"><use href="#restore"/></svg></button><button class="tb w24 dark" aria-label="关闭"><svg class="i14"><use href="#close"/></svg></button>
  <div class="topshade"></div>
</header>

<nav class="tabs">
  <button class="file">文件(F)</button><button class="tab on">主页</button><button class="tab">装配</button><button class="tab">曲线</button><button class="tab">曲面</button><button class="tab">分析</button><button class="tab">视图</button><button class="tab">渲染</button><button class="tab">工具</button><button class="tab">应用模块</button><button class="tab">内部</button>
  <div class="tabright">
    <label class="search"><input type="text" placeholder="查找命令" aria-label="查找命令"><svg class="i16"><use href="#find"/></svg></label>
    <button class="tb w26" aria-label="全屏"><svg class="i16"><use href="#full"/></svg></button><button class="tb w26" aria-label="收起功能区"><svg class="i16"><use href="#chev2"/></svg></button><button class="tb w26" aria-label="帮助"><span class="help">?</span></button>
  </div>
</nav>

<section class="ribbon">
  <div class="grp g-sketch">
    <div class="gb"><button class="big b58"><svg class="i32"><use href="#sketch"/></svg><span>草图</span></button>
      <div class="gallery"><button aria-label="轮廓"><svg><use href="#g1"/></svg></button><button aria-label="矩形"><svg><use href="#g2"/></svg></button><button aria-label="直线"><svg><use href="#g3"/></svg></button><button aria-label="圆弧"><svg><use href="#g4"/></svg></button><button aria-label="圆"><svg><use href="#g5"/></svg></button><button aria-label="点"><svg><use href="#g6"/></svg></button></div>
      <div class="galnav"><button class="dd up" aria-label="上翻"></button><button class="dd" aria-label="下翻"></button><button class="dd" aria-label="展开"><svg class="more"><use href="#more"/></svg></button></div></div>
    <div class="gl"><span>直接草图</span><button class="dd" aria-label="组选项"></button></div>
  </div>
  <div class="grp g-feature">
    <div class="gb p10"><button class="big b48"><svg class="i32"><use href="#plane"/></svg><span>基准平面</span><i class="dn"></i></button><button class="big b44"><svg class="i32"><use href="#extrude"/></svg><span>拉伸</span><i class="dn"></i></button><button class="big b36"><svg class="i32"><use href="#hole"/></svg><span>孔</span></button>
      <div class="col m9"><button><svg class="i16"><use href="#pattern"/></svg>阵列特征</button><button><svg class="i16"><use href="#unite"/></svg>合并<i class="dn side"></i></button><button><svg class="i16"><use href="#shell"/></svg>抽壳</button></div>
      <button class="big b50"><svg class="i32"><use href="#blend"/></svg><span>边倒圆</span><i class="dn"></i></button>
      <div class="col"><button><svg class="i16"><use href="#chamfer"/></svg>倒斜角</button><button><svg class="i16"><use href="#trim"/></svg>修剪体</button><button><svg class="i16"><use href="#draft"/></svg>拔模</button></div>
      <button class="big morebtn"><b><svg class="i16"><use href="#stamp"/></svg></b><span>更多</span><i class="dn"></i></button></div>
    <div class="gl"><span>特征</span><button class="dd" aria-label="组选项"></button></div>
  </div>
  <div class="grp g-sync">
    <div class="gb p10"><button class="big b36"><svg class="i32"><use href="#moveface"/></svg><span>移动面</span></button>
      <div class="col m9"><button><svg class="i16"><use href="#face"/></svg>偏置区域</button><button><svg class="i16"><use href="#face"/></svg>替换面</button><button><svg class="i16"><use href="#delface"/></svg>删除面</button></div>
      <button class="big morebtn"><b><svg class="i16"><use href="#swap"/></svg></b><span>更多</span><i class="dn"></i></button></div>
    <div class="gl"><span>同步建模</span><button class="dd" aria-label="组选项"></button></div>
  </div>
  <div class="grp g-std">
    <div class="ib"><div><button><svg class="i16"><use href="#attr"/></svg></button><button><svg class="i16"><use href="#layers"/></svg></button><button><svg class="i16"><use href="#layerlist"/></svg></button><i></i><button><svg class="i16"><use href="#tag"/></svg></button></div><div><button><svg class="i16"><use href="#partok"/></svg></button><button><svg class="i16"><use href="#curveok"/></svg></button><button><svg class="i16"><use href="#goldok"/></svg></button><i></i><button><svg class="i16"><use href="#goldpen"/></svg></button></div></div>
    <div class="gl"><span>标准化工具 - G...</span><button class="dd" aria-label="组选项"></button></div>
  </div>
  <div class="grp g-gear">
    <div class="ib"><div><button><svg class="i16"><use href="#gear2"/></svg></button><button><svg class="i16"><use href="#gear3"/></svg></button></div><div><button><svg class="i16"><use href="#gearhand"/></svg></button></div></div>
    <div class="gl"><span>齿轮...</span><button class="dd" aria-label="组选项"></button></div>
  </div>
  <div class="grp g-spring">
    <div class="ib"><div><button><svg class="i16"><use href="#coil"/></svg></button><button><svg class="i16"><use href="#coil2"/></svg></button></div><div><button><svg class="i16"><use href="#bobbin"/></svg></button><i></i><button><svg class="i16"><use href="#springcut"/></svg></button></div></div>
    <div class="gl"><span>弹簧...</span><button class="dd" aria-label="组选项"></button></div>
  </div>
  <div class="grp g-mach">
    <div class="ib"><div><button><svg class="i16"><use href="#toolok"/></svg></button><button><svg class="i16"><use href="#tooldoc"/></svg></button></div><div><button><svg class="i16"><use href="#tablex"/></svg></button><button><svg class="i16"><use href="#csys"/></svg></button></div></div>
    <div class="gl"><span>加工...</span><button class="dd" aria-label="组选项"></button></div>
  </div>
  <div class="grp g-model">
    <div class="ib"><div><button><svg class="i16"><use href="#tri"/></svg></button><button><svg class="i16"><use href="#tabletri"/></svg></button><button><svg class="i16"><use href="#foldplus"/></svg></button><button><svg class="i16"><use href="#foldring"/></svg></button></div><div><button><svg class="i16"><use href="#doclines"/></svg></button><button><svg class="i16"><use href="#dimbrush"/></svg></button><i></i><button class="fmt"><svg class="bin" viewBox="0 0 16 8"><circle cx="5" cy="4" r="3" fill="#556"/><circle cx="11" cy="4" r="3" fill="#556"/><circle cx="5" cy="5" r="1.200" fill="#9ab"/><circle cx="11" cy="5" r="1.200" fill="#9ab"/></svg><span>10<em>H7</em></span></button></div></div>
    <div class="gl"><span>建模工具 - G...</span><button class="dd" aria-label="组选项"></button></div>
  </div>
  <div class="grp g-q">
    <div class="ib"><div><button><svg class="i16"><use href="#golds"/></svg></button></div><div><button><svg class="i16"><use href="#golds"/></svg></button></div></div>
    <div class="gl"><span>?..</span><button class="dd" aria-label="组选项"></button></div>
  </div>
  <div class="grp g-dim">
    <div class="ib"><div><button><svg class="i16"><use href="#dimstep"/></svg></button><i></i><button><svg class="i16"><use href="#xx"/></svg></button><button class="fmt"><span>1.00</span><em>±.05</em></button><button class="fmt"><span>1.00</span><em>+.05</em></button><button class="fmt"><span>1.00</span><em>+.05</em></button><button class="fmt"><span>1.00</span><em>-.03</em></button><button><svg class="i16"><use href="#xbox"/></svg></button><button><svg class="i16"><use href="#xpar"/></svg></button><button class="fmt blue"><span>10H7</span></button><button class="fmt blue"><span>10H7</span><span>(8.01)</span></button><button class="fmt blue"><span>10H7</span><span>(8.01)</span></button><button class="fmt blue"><span>10</span><span>(8.01)</span></button></div><div><button class="fmt"><em>R0</em><svg class="lead" viewBox="0 0 16 8"><path d="M2 7L14 1M1 8l4-4 1 3z" stroke="#c22" fill="#c22"/></svg></button><button class="fmt"><em>R[0]</em><svg class="lead" viewBox="0 0 16 8"><path d="M2 6l4-4h9M1 7l3-4 1 3z" stroke="#c22" fill="none"/></svg></button><i></i><button><svg class="i16"><use href="#dia"/></svg></button><button><svg class="i16"><use href="#dia2"/></svg></button><button><svg class="i16"><use href="#ret"/></svg></button></div></div>
    <div class="gl"><span>尺寸快速格式化工具 - GC工具箱</span><button class="dd" aria-label="组选项"></button></div>
  </div>
  <div class="grp g-surf"><div class="gb"><button class="big b42"><svg class="i32"><use href="#surface"/></svg><span>曲面</span><i class="dn"></i></button></div></div>
  <div class="grp g-asm">
    <div class="gb p10"><button class="big b48 off"><svg class="i32"><use href="#procasm"/></svg><span>处理装配</span></button><button class="big b44"><svg class="i32"><use href="#add"/></svg><span>添加</span><i class="dn"></i></button>
      <div class="col m4"><button><svg class="i16"><use href="#constrain"/></svg>装配约束</button><button><svg class="i16"><use href="#movecomp"/></svg>移动组件</button><button><svg class="i16"><use href="#patcomp"/></svg>阵列组件</button></div></div>
    <div class="gl"><span>装配</span><button class="dd" aria-label="组选项"></button></div>
  </div>
  <button class="dd ribend" aria-label="功能区选项"></button>
</section>

<section class="selbar">
  <button class="tb txt menu"><svg class="i16"><use href="#menu"/></svg><span>菜单(<u>M</u>)</span></button><button class="dd" aria-label="菜单列表"></button><i class="vs"></i>
  <span class="sel s1"><select aria-label="类型过滤器"><option>无选择过滤器</option></select></span>
  <span class="sel s2"><select aria-label="选择范围"><option>仅在工作部件内</option></select></span>
  <div class="run r24"><button class="tb"><svg class="i16"><use href="#asmgray"/></svg></button><button class="tb"><svg class="i16"><use href="#filtgray"/></svg></button><button class="tb"><svg class="i16"><use href="#filtred"/></svg></button><button class="dd" aria-label="过滤器列表"></button><button class="tb"><svg class="i16"><use href="#target"/></svg></button><button class="tb"><svg class="i16"><use href="#filtgray"/></svg></button><button class="tb"><svg class="i16"><use href="#cubered"/></svg></button><button class="tb w26"><svg class="i16"><use href="#dashbox"/></svg></button><button class="dd" aria-label="选择方式"></button><button class="tb"><svg class="i16"><use href="#shade"/></svg></button><button class="tb"><svg class="i16"><use href="#cubeblue"/></svg></button></div>
  <span class="sel s3"><select aria-label="曲线规则"><option>自动判断曲线</option></select></span>
  <div class="run r25"><button class="tb"><svg class="i16"><use href="#hash"/></svg></button><button class="tb"><svg class="i16"><use href="#arrowr"/></svg></button><button class="tb"><svg class="i16"><use href="#s1"/></svg></button><button class="tb"><svg class="i16"><use href="#s2"/></svg></button><button class="tb"><svg class="i16"><use href="#s3"/></svg></button><button class="tb"><svg class="i16"><use href="#s4"/></svg></button><button class="tb"><svg class="i16"><use href="#s5"/></svg></button><button class="tb"><svg class="i16"><use href="#s6"/></svg></button><button class="tb"><svg class="i16"><use href="#s7"/></svg></button><button class="tb"><svg class="i16"><use href="#s8"/></svg></button><button class="tb"><svg class="i16"><use href="#s9"/></svg></button><button class="tb"><svg class="i16"><use href="#s10"/></svg></button><button class="tb"><svg class="i16"><use href="#s2"/></svg></button><button class="tb"><svg class="i16"><use href="#s12"/></svg></button><button class="tb"><svg class="i16"><use href="#s13"/></svg></button><button class="tb"><svg class="i16"><use href="#s14"/></svg></button></div>
  <i class="vs vm"></i>
  <div class="run r25 nom"><button class="tb"><svg class="i16"><use href="#zoomwin"/></svg></button><button class="tb"><svg class="i16"><use href="#pan"/></svg></button><button class="tb"><svg class="i16"><use href="#rotate"/></svg></button><button class="tb"><svg class="i16"><use href="#persp"/></svg></button><button class="tb"><svg class="i16"><use href="#graytree"/></svg></button><button class="tb"><svg class="i16"><use href="#wingrid"/></svg></button><button class="dd" aria-label="窗口布局"></button><button class="tb"><svg class="i16"><use href="#section"/></svg></button><button class="dd" aria-label="截面"></button><button class="tb"><svg class="i16"><use href="#cube"/></svg></button><button class="dd" aria-label="渲染样式"></button><button class="tb"><svg class="i16"><use href="#pointer3"/></svg></button><button class="dd" aria-label="定向视图"></button></div>
  <i class="vs"></i>
  <button class="dd barend" aria-label="工具条选项"></button>
</section>

<main class="work">
  <nav class="rail">
    <button class="first" aria-label="资源条选项"><svg class="i16"><use href="#gear"/></svg></button>
    <button aria-label="装配导航器"><svg class="i24"><use href="#r1"/></svg></button><button aria-label="约束导航器"><svg class="i24"><use href="#r2"/></svg></button><button class="on" aria-label="部件导航器"><svg class="i24"><use href="#r3"/></svg></button><button aria-label="重用库"><svg class="i24"><use href="#r4"/></svg></button>
    <button class="gap" aria-label="HD3D 工具"><svg class="i24"><use href="#r5"/></svg></button><button class="gap" aria-label="Web 浏览器"><svg class="i24"><use href="#r6"/></svg></button><button class="gap" aria-label="历史记录"><svg class="i24"><use href="#r7"/></svg></button><button aria-label="系统材料"><svg class="i24"><use href="#r8"/></svg></button><button aria-label="加工向导"><svg class="i24"><use href="#r9"/></svg></button><button aria-label="角色"><svg class="i24"><use href="#r10"/></svg></button>
  </nav>

  <aside class="nav">
    <header><h2>部件导航器</h2><button class="sq" aria-label="最大化"></button></header>
    <div class="treebox">
      <div class="treescroll">
      <table>
        <colgroup><col class="c1"><col class="c2"><col class="c3"></colgroup>
        <thead><tr><th>名称<i class="sort"></i></th><th>最新</th><th>附</th></tr></thead>
        <tbody>
          <tr><td><div class="n"><i class="ex"></i><svg class="i16"><use href="#views"/></svg>模型视图</div></td><td></td><td></td></tr>
          <tr><td><div class="n cam"><i class="ex"></i><svg class="i12"><use href="#check"/></svg><svg class="i16"><use href="#camera"/></svg>摄像机</div></td><td></td><td></td></tr>
          <tr><td><div class="n"><i class="ex"></i><svg class="i16"><use href="#folder"/></svg>非时间戳记几何体</div></td><td></td><td></td></tr>
          <tr><td><div class="n last"><i class="ex minus"></i><svg class="i16"><use href="#folder"/></svg>模型历史记录</div></td><td></td><td></td></tr>
          <tr><td><label class="n kid"><input type="checkbox" checked><svg class="i16"><use href="#csys"/></svg>基准坐标系 (0)</label></td><td><svg class="i12"><use href="#check"/></svg></td><td></td></tr>
          <tr><td><label class="n kid"><input type="checkbox" checked><svg class="i16"><use href="#cube"/></svg>块 (1)</label></td><td><svg class="i12"><use href="#check"/></svg></td><td></td></tr>
          <tr><td><label class="n kid"><input type="checkbox" checked><svg class="i16"><use href="#offset"/></svg>偏置曲线 (2)</label></td><td><svg class="i12"><use href="#check"/></svg></td><td></td></tr>
          <tr><td><label class="n kid last bold"><input type="checkbox" checked><span class="glyph">A</span>文本 (3)</label></td><td><svg class="i12"><use href="#check"/></svg></td><td></td></tr>
        </tbody>
      </table>
      <div class="blank"></div>
      </div>
      <div class="hbar"><button aria-label="左移"><svg class="i10"><path d="M7 1L3 5l4 4" /></svg></button><div class="track"><div class="thumb"></div></div><button aria-label="右移"><svg class="i10"><path d="M3 1l4 4-4 4" /></svg></button></div>
    </div>
    <div class="split"></div>
    <button class="fold">相关性<svg class="ch"><use href="#chd"/></svg></button>
    <button class="fold">细节<svg class="ch"><use href="#chd"/></svg></button>
    <button class="fold">预览<svg class="ch"><use href="#chd"/></svg></button>
  </aside>

  <section class="view">
    <div class="doctabs"><div class="doctab"><svg class="i16"><use href="#part"/></svg><span>_model1.prt</span><svg class="i12"><use href="#edit"/></svg><button aria-label="关闭标签"><svg class="i10b"><use href="#close"/></svg></button></div></div>
    <div class="stage">
      <svg class="scene" viewBox="364 203 1555 815" preserveAspectRatio="xMinYMin slice">
        <path d="M691 247L1640 202 1711 715 763 762z" fill="#ffcf0a"/>
        <path d="M640 130L691 247 763 762 752 857 692 438z" fill="#b26a00"/>
        <path d="M763 762L1711 715 1700 809 752 857z" fill="#643c00"/>
        <path d="M691 247L1640 202 1711 715 763 762zM763 762L752 857M1711 715L1700 809 752 857 692 438" fill="none" stroke="#333" stroke-width="1"/>
        <path d="M728 504L1675 458" stroke="#86dc78" stroke-width="2"/>
        <text class="solid" x="992 1098 1212 1324" y="484 480 476 466">山涧栗子</text>
        <path d="M1119 433L1068 385M1070 470L1087 422M1121 467L1126 413M1134 450L1139 397M1140 437L1175 396M1163 443L1176 396M1177 434L1198 387M1153 466L1121 512M1236 457L1258 412M1262 454L1282 408M1278 426L1328 452M1263 460L1206 453M1248 430L1272 482M1403 443L1472 440" stroke="#7d6a2c" stroke-width="5" stroke-linecap="round"/>
        <path d="M1119 433L1068 385M1070 470L1087 422M1121 467L1126 413M1134 450L1139 397M1140 437L1175 396M1163 443L1176 396M1177 434L1198 387M1153 466L1121 512M1236 457L1258 412M1262 454L1282 408M1278 426L1328 452M1263 460L1206 453M1248 430L1272 482M1403 443L1472 440" stroke="#c2ad60" stroke-width="3" stroke-linecap="round"/>
        <g fill="#cdb765" stroke="#7d6a2c"><path d="M1060 377l15 9-7 7zM1092 409l-1 14-9-3zM1128 397l3 15h-9zM1140 382l3 15h-9zM1181 381l-2 17-8-5zM1205 373l-4 15-9-4zM1115 523l2-14 7 6zM1262 400l-1 15-9-4zM1288 395l-3 15-9-4zM1196 453l13-5v10zM1280 495l-11-12 8-4zM1487 439l-17-4v9z"/></g>
        <g fill="#5d4d18"><circle cx="1071" cy="389" r="4"/><circle cx="1087" cy="421" r="4"/><circle cx="1126" cy="411" r="4"/><circle cx="1138" cy="396" r="4"/><circle cx="1174" cy="396" r="4"/><circle cx="1198" cy="386" r="4"/><circle cx="1257" cy="412" r="4"/><circle cx="1282" cy="407" r="4"/></g>
        <path d="M1190 455v-18" stroke="#0a58a8" stroke-width="3"/><path d="M1191 429l5 13h-10z" fill="#0a60b8"/><circle cx="1189" cy="453" r="5" fill="#8f7f48"/><path d="M1191 440L1240 460" stroke="#665520"/>
        <g fill="none" stroke="#5a50e8" stroke-width="1.500"><path d="M752 855L737 745M745 800l5-37 7 52M757 815L762 780M757 817l66-3-5 39M752 855l130-5"/></g>
        <path d="M745 802l66-3 7 54" fill="none" stroke="#c9c9c9" stroke-width="1.500"/>
        <path d="M752 855l-7-42 6 0z" fill="#3aa83a"/><path d="M752 853l1-25 4 0z" fill="#0a2a90" stroke="#0a2a90" stroke-width="3"/><path d="M752 855q43-7 56-1-30 4-56 1z" fill="#d82a2a"/>
        <path d="M735 763l2-13 4 13zM758 789l3-12 2 12zM868 847l14 3-14 3z" fill="#0a0ac8"/>
        <path d="M744 856h18M752 848v15" stroke="#7878e0" stroke-width="2"/>
        <g class="ax"><text x="731" y="747" fill="#5050ff">Y</text><text x="757" y="778" fill="#5050ff">Z</text><text x="749" y="809" fill="#3a9a2a">YC</text><text x="738" y="822" fill="#2a5ae0">ZC</text><text x="794" y="849" fill="#d83a3a">XC</text><text x="886" y="854" fill="#2020e0">X</text></g>
        <path d="M427 914l27-2 4 22-2 15-29 1z" fill="#cfcfcf" stroke="#a8a8a8"/><path d="M427 929l30-1M427 935l30-1M454 912l-2 37" stroke="#a8a8a8" fill="none"/>
        <path d="M429 950l-4-32" stroke="#2a9a2a" stroke-width="2"/><path d="M424 913l4 12h-6z" fill="#2a9a2a"/><path d="M430 950l2-20" stroke="#0a2a90" stroke-width="3"/><path d="M432 924l4 12h-8z" fill="#0a2a90"/><path d="M430 950l36-1" stroke="#d82a2a" stroke-width="2"/><path d="M472 949l-10-3v6z" fill="#d82a2a"/><circle cx="429" cy="950" r="4" fill="#aaa"/>
        <g class="ax"><text x="419" y="915" fill="#3a9a3a">Y</text><text x="428" y="927" fill="#2a4ae0">Z</text><text x="474" y="953" fill="#d83a3a">X</text></g>
      </svg>

      <form class="dialog" onsubmit="return false">
        <header><svg class="i14"><use href="#gear"/></svg><h2>拉伸</h2><button aria-label="重置"><svg class="i14"><use href="#reset"/></svg></button><button aria-label="关闭"><svg class="i14"><use href="#close"/></svg></button></header>
        <div class="dbody">
          <fieldset><button class="dh">表区域驱动<svg class="ch"><use href="#chu"/></svg></button>
            <div class="row r32"><div class="pick hot"><svg class="i12"><use href="#check"/></svg>选择曲线 (14)</div><button class="k24" aria-label="反向"><svg class="i16"><use href="#rev"/></svg></button><button class="k24 dis" aria-label="绘制截面"><svg class="i16"><use href="#sketchg"/></svg></button><button class="k32 yel" aria-label="曲线"><svg class="i24"><use href="#rule"/></svg></button></div>
            <div class="row r32"><span class="lab">指定原始曲线</span><button class="k32" aria-label="原始曲线"><svg class="i24"><use href="#orig"/></svg></button></div>
          </fieldset>
          <fieldset><button class="dh">方向<svg class="ch"><use href="#chu"/></svg></button>
            <div class="row r32"><div class="pick"><svg class="i12"><use href="#check"/></svg>指定矢量</div><button class="k24" aria-label="反向"><svg class="i16"><use href="#rev"/></svg></button><button class="k24" aria-label="矢量对话框"><svg class="i16"><use href="#vecdlg"/></svg></button><div class="duo"><button class="k32" aria-label="自动判断的矢量"><svg class="i24"><use href="#vec"/></svg></button><button class="kd" aria-label="矢量列表"><i class="dn"></i></button></div></div>
          </fieldset>
          <fieldset><button class="dh">限制<svg class="ch"><use href="#chu"/></svg></button>
            <div class="row r26"><label class="lab" for="f1">开始</label><span class="dsel"><svg class="i16"><use href="#val"/></svg><select id="f1"><option>值</option></select></span></div>
            <div class="row r25h"><label class="lab" for="f2">距离</label><span class="dsel num"><input id="f2" type="text" value="0"><span>mm</span></span></div>
            <div class="row r26"><label class="lab" for="f3">结束</label><span class="dsel"><svg class="i16"><use href="#val"/></svg><select id="f3"><option>值</option></select></span></div>
            <div class="row r25h"><label class="lab" for="f4">距离</label><span class="dsel num"><input id="f4" class="marked" type="text" value="3"><span>mm</span></span></div>
            <label class="row tick"><input type="checkbox">开放轮廓智能体</label>
          </fieldset>
          <fieldset><button class="dh">布尔<svg class="ch"><use href="#chu"/></svg></button>
            <div class="row r26"><label class="lab" for="f5">布尔 ( 求和 )</label><span class="dsel"><svg class="i16"><use href="#bool"/></svg><select id="f5"><option>自动判断</option></select></span></div>
            <div class="row r32"><div class="pick"><svg class="i12"><use href="#check"/></svg>选择体 (1)</div><button class="k32" aria-label="选择体"><svg class="i24"><use href="#body"/></svg></button></div>
          </fieldset>
          <fieldset class="shut"><button class="dh">拔模<svg class="ch"><use href="#chd"/></svg></button></fieldset>
          <fieldset class="shut"><button class="dh">偏置<svg class="ch"><use href="#chd"/></svg></button></fieldset>
          <fieldset class="shut"><button class="dh">设置<svg class="ch"><use href="#chd"/></svg></button></fieldset>
          <fieldset class="shut"><button class="dh">预览<svg class="ch"><use href="#chd"/></svg></button></fieldset>
          <footer><button class="ok">&lt; 确定 &gt;</button><button>应用</button><button>取消</button></footer>
        </div>
      </form>

      <div class="float"><i class="grip"></i><button aria-label="限制类型"><svg class="i16"><use href="#val"/></svg><i class="dn"></i></button><label for="endv">结束</label><span class="fin"><input id="endv" type="text" value="3"><i class="dn"></i></span></div>
    </div>
  </section>
</main>

<footer class="status"><strong>选择截面几何图形</strong><strong class="mid">布尔运算将是“求和”。</strong><div class="sicons"><svg class="i16 grayed"><use href="#sketchg"/></svg><svg class="i16"><use href="#full"/></svg></div></footer>

<div class="corner">
  <svg class="gauge" viewBox="0 0 70 70"><circle cx="35" cy="35" r="33" fill="#f4f4f4"/><circle cx="35" cy="35" r="31" fill="none" stroke="#4fe068" stroke-width="4" stroke-dasharray="142 60" transform="rotate(-90 35 35)"/><circle cx="35" cy="35" r="28" fill="#f6fff8" stroke="#25c768"/><text x="16" y="36" font-size="23">73</text><text x="42" y="36" font-size="13">%</text></svg>
  <div class="ime"><svg class="sogou" viewBox="0 0 32 30"><path d="M2 5L24 1q4-1 5 3l2 18q0 4-3 4L8 30q-4 0-5-4L0 9q0-3 2-4z" fill="#f4521e"/><path d="M23 8q-14-4-15 2c0 6 16 1 16 8 0 5-9 6-16 3" fill="none" stroke="#fff" stroke-width="4"/></svg>
    <span class="zh">中</span><span class="zh">°,</span>
    <svg class="i16" viewBox="0 0 16 16"><path d="M5 4a3 3 0 0 1 6 0v4a3 3 0 0 1-6 0z" fill="#0a6ad8"/><path d="M2 7q0 6 6 6t6-6M8 13v3" fill="none" stroke="#0a6ad8" stroke-width="1.500"/></svg>
    <svg class="i16" viewBox="0 0 16 16"><path d="M1 3h14v11H1z" fill="none" stroke="#0a6ad8" stroke-width="1.500"/><path d="M3 6h10M3 8.500h10" stroke="#0a6ad8" stroke-width="1.500" stroke-dasharray="2 1"/><path d="M4 11.500h8" stroke="#0a6ad8" stroke-width="1.500"/></svg>
    <svg class="i16" viewBox="0 0 16 16"><path d="M2 3h4v4H2zM2 10h4v4H2zM10 10h4v4h-4z" fill="#0a6ad8" stroke="#0a6ad8" stroke-width="2" stroke-linejoin="round"/><circle cx="12" cy="4.500" r="3.300" fill="#0a6ad8"/></svg></div>
</div>
<div class="mark">https://blog.csdn.net/weixin_43911798</div>
</body>
</html>
```
FILE: styles.css
```css
* { box-sizing: border-box; }
html, body { height: 100%; margin: 0; }
body {
  display: flex; flex-direction: column; overflow: hidden; position: relative;
  font: 11px/16px "Noto Sans", "Noto Sans CJK SC", sans-serif; color: #1c1c1c; background: #fff;
}
button, input, select { font: inherit; color: inherit; margin: 0; }
button { border: 0; background: none; padding: 0; }
h1, h2 { margin: 0; font-size: 12px; font-weight: 400; }
i, em { font-style: normal; }
svg { flex: none; display: block; }
.sprite { position: absolute; width: 0; height: 0; }
.i10 { width: 10px; height: 10px; fill: none; stroke: #444; stroke-width: 2; }
.i10b { width: 10px; height: 10px; color: #c9c2b4; }
.i12 { width: 12px; height: 12px; }
.i14 { width: 14px; height: 14px; }
.i16 { width: 16px; height: 16px; }
.i24 { width: 24px; height: 24px; }
.i32 { width: 32px; height: 32px; }
.more { width: 9px; height: 8px; }

.tb { display: flex; align-items: center; justify-content: center; gap: 5px; }
.w23 { width: 23px; }
.w24 { width: 24px; }
.w26 { width: 26px; }
.w28 { width: 28px; }
.w30 { width: 30px; }
.w32 { width: 32px; }
.ml { margin-left: 4px; }
.txt { padding: 0 3px; }
.titlebar .txt { padding: 0 3px 0 5px; }
.vs { width: 1px; height: 19px; background: #d4d4d4; flex: none; }
.dn, .dd:empty::before, .sel::after, .dsel::after {
  content: ""; width: 0; height: 0; border: 3px solid transparent; border-top: 4px solid #000; border-bottom: 0; flex: none;
}
.dd { width: 12px; height: 14px; display: flex; align-items: center; justify-content: center; flex: none; }
.dd.up::before { border-top: 0; border-bottom: 4px solid #999; }

/* title bar */
.titlebar { height: 26px; flex: none; display: flex; align-items: center; position: relative; padding-right: 1px; }
.logo { width: 41px; padding-left: 4px; font: 700 22px/24px "Liberation Sans", sans-serif; color: #7b97a8; }
.titlebar h1 { flex: 1; text-align: center; color: #000; }
.brand { font: 700 14px/20px "Noto Sans", sans-serif; color: #009999; margin-right: 18px; }
.dark { color: #444; }
.topshade { position: absolute; left: 1258px; width: 282px; top: 0; height: 1px; background: #c8c8c8; box-shadow: 0 0 3px 1px #ccc; }

/* ribbon tabs */
.tabs { height: 28px; flex: none; display: flex; background: #dcdcdc; font-size: 13px; line-height: 24px; }
.file { width: 81px; background: #549fb8; color: #fff; margin-right: 2px; }
.tab { padding: 0 13px 2px; }
.tab.on { background: #fff; color: #006487; border-top: 1px solid #b5b5b5; }
.tabright { margin-left: auto; display: flex; align-items: center; padding-right: 3px; }
.search { width: 125px; height: 20px; border: 1px solid #aaa; background: #fff; display: flex; align-items: center; margin-right: 6px; }
.search input { border: 0; padding: 0 2px; width: 105px; height: 18px; font-size: 11px; outline: 0; background: none; }
.search input::placeholder { color: #a8a8a8; }
.help { width: 14px; height: 14px; border-radius: 50%; background: #3a63c6; color: #fff; font-size: 11px; line-height: 14px; font-weight: 700; }

/* ribbon */
.ribbon { height: 94px; flex: none; display: flex; border-bottom: 1px solid #dcdcdc; position: relative; }
.grp { display: flex; flex-direction: column; position: relative; flex: none; }
.grp::after { content: ""; position: absolute; right: 0; top: 5px; height: 84px; width: 1px; background: #d8d8d8; }
.g-sketch { width: 178px; }
.g-feature { width: 369px; }
.g-sync { width: 172px; }
.g-std { width: 105px; }
.g-gear { width: 51px; }
.g-spring { width: 58px; }
.g-mach { width: 52px; }
.g-model { width: 98px; }
.g-q { width: 29px; }
.g-dim { width: 288px; }
.g-surf { width: 43px; }
.g-asm { width: 181px; }
.gb { height: 75px; display: flex; align-items: flex-start; }
.p10 { padding-left: 10px; }
.big { height: 74px; padding-top: 5px; display: flex; flex-direction: column; align-items: center; white-space: nowrap; flex: none; }
.big span { margin-top: 4px; line-height: 16px; }
.big .dn { margin-top: 4px; }
.b36 { width: 36px; }
.b42 { width: 42px; }
.b44 { width: 44px; }
.b48 { width: 48px; }
.b50 { width: 50px; }
.b58 { width: 57px; }
.off { color: #c4c4c4; }
.col { padding-top: 1px; display: flex; flex-direction: column; margin-left: 1px; }
.m9 { margin-left: 9px; }
.m4 { margin-left: 4px; }
.col button { height: 22px; display: flex; align-items: center; gap: 4px; white-space: nowrap; }
.side { margin-left: 4px; }
.morebtn { margin-left: 10px; padding-top: 4px; }
.morebtn b { width: 38px; height: 35px; border: 1px solid #d8d8d8; border-radius: 4px; display: flex; align-items: center; justify-content: center; }
.morebtn span { margin-top: 2px; }
.gallery { width: 99px; height: 66px; margin-top: 5px; border: 1px solid #d8d8d8; display: grid; grid-template-columns: 1fr 1fr 1fr; grid-template-rows: 1fr 1fr; place-items: center; }
.gallery svg { width: 22px; height: 21px; }
.galnav { height: 66px; margin: 5px 0 0 3px; display: flex; flex-direction: column; justify-content: space-around; }
.gl { height: 18px; display: flex; align-items: center; padding-right: 6px; color: #006487; white-space: nowrap; }
.gl span { flex: 1; text-align: center; min-width: 0; }
.ib { height: 75px; padding: 6px 0 0 4px; }
.ib div { display: flex; align-items: center; height: 30px; }
.ib button { width: 23px; height: 30px; display: flex; align-items: center; justify-content: center; flex: none; }
.ib i { width: 1px; height: 18px; background: #ccc; margin: 0 2px; }
.ib .fmt { flex-direction: column; font-size: 7px; line-height: 8px; }
.fmt em { color: #b83a3a; font-weight: 700; }
.ib .blue { color: #3838b8; }
.bin, .lead { width: 16px; height: 8px; }
.ribend, .barend { margin: auto 2px 4px auto; }

/* selection bar */
.selbar { height: 32px; flex: none; display: flex; align-items: center; border-bottom: 1px solid #8f9494; }
.menu { padding: 0 0 0 10px; }
.selbar > .vs { height: 24px; margin-left: 3px; }
.sel { position: relative; height: 20px; display: flex; align-items: center; border: 1px solid #a8a8a8; }
.sel select { appearance: none; border: 0; background: none; width: 100%; height: 18px; padding: 0 2px; font-size: 11px; outline: 0; }
.sel::after, .dsel::after { position: absolute; right: 5px; top: 7px; border-width: 5px 4px 0; pointer-events: none; }
.s1 { width: 133px; margin-left: 13px; }
.s2 { width: 140px; margin-left: 8px; }
.s3 { width: 140px; margin-left: 6px; }
.run { display: flex; align-items: center; }
.r24 { margin-left: 6px; }
.r24 .tb { width: 24px; }
.r24 .w26 { width: 26px; }
.r25 { margin-left: 6px; }
.r25 .tb { width: 25px; }
.selbar > .vm { margin-left: 6px; }
.nom { margin-left: 7px; }
.selbar > .vs:nth-last-child(2) { margin-left: 6px; }

/* working area */
.work { flex: 1; display: flex; min-height: 0; }
.rail { width: 32px; flex: none; background: #dcdcdc; border-right: 1px solid #999; display: flex; flex-direction: column; }
.rail button { height: 42px; padding-left: 5px; display: flex; align-items: center; justify-content: center; flex: none; }
.rail .first { height: 26px; padding: 0 2px 0 0; margin-bottom: 17px; color: #333; }
.rail .on { height: 46px; margin: -2px -1px -2px 2px; padding-left: 2px; background: #fff; border: 1px solid #999; border-right: 0; }
.rail .gap { margin-top: 12px; }

.nav { width: 332px; flex: none; border-right: 1px solid #8f9494; padding: 0 9px 6px 6px; display: flex; flex-direction: column; }
.nav header { height: 28px; padding: 2px 7px 0 4px; display: flex; align-items: center; justify-content: space-between; flex: none; }
.sq { width: 12px; height: 11px; border: 1px solid #222; border-top-width: 2px; }
.treebox { flex: 1; min-height: 0; border: 1px solid #d4d4d4; padding: 1px 1px 0; display: flex; flex-direction: column; }
.treescroll { flex: 1; min-height: 0; display: flex; flex-direction: column; overflow: hidden; }
table { width: 100%; border-collapse: collapse; table-layout: fixed; font-size: 12px; line-height: 16px; }
.c1 { width: 199px; }
.c2 { width: 100px; }
th { height: 21px; padding: 1px 0 0 5px; background: #eee; border-right: 1px solid #ccc; border-bottom: 1px solid #ccc; text-align: left; font-weight: 400; overflow: hidden; white-space: nowrap; }
th:last-child, td:last-child { border-right: 0; }
.sort { display: inline-block; margin: 0 0 2px 18px; border: 5px solid transparent; border-top: 0; border-bottom-color: #111; }
td { height: 20px; padding: 0 0 0 6px; border-right: 1px solid #e6e6e6; border-bottom: 1px solid #e8e8e8; }
td:first-child { padding: 0 0 0 5px; }
tbody tr:nth-child(even) { background: #f9f9f9; }
.n { height: 19px; display: flex; align-items: center; white-space: nowrap; position: relative; gap: 3px; }
.n .ex { margin-right: 1px; }
.ex { width: 9px; height: 9px; border: 1px solid #bbb; position: relative; flex: none; background: linear-gradient(#000, #000) center / 5px 1px no-repeat, linear-gradient(#000, #000) center / 1px 5px no-repeat, #fff; }
.ex.minus { background: linear-gradient(#000, #000) center / 5px 1px no-repeat, #fff; }
.n:not(.kid):not(.last)::before { content: ""; position: absolute; left: 4px; top: 14px; height: 12px; border-left: 1px dotted #888; }
.cam .i12 { margin-left: 2px; }
.kid { padding-left: 35px; gap: 2px; }
.kid::before { content: ""; position: absolute; left: 23px; top: 0; height: 20px; border-left: 1px dotted #888; }
.kid::after { content: ""; position: absolute; left: 24px; top: 10px; width: 9px; border-top: 1px dotted #888; }
.kid.last::before { height: 10px; }
.kid input, .tick input { appearance: none; width: 12px; height: 12px; border: 1px solid #111; background: #fff; margin: 0; position: relative; flex: none; }
.kid input:checked::after { content: ""; position: absolute; left: 3px; top: 0; width: 4px; height: 7px; border: solid #16c030; border-width: 0 3px 3px 0; transform: rotate(38deg); }
.bold { font-weight: 700; }
.glyph { width: 16px; text-align: center; font: 700 16px/16px "Liberation Serif", serif; }
.blank { flex: 1; background:
  linear-gradient(90deg, transparent 198px, #e6e6e6 198px, #e6e6e6 199px, transparent 199px, transparent 298px, #e6e6e6 298px, #e6e6e6 299px, transparent 299px),
  repeating-linear-gradient(#fff 0 19px, #e8e8e8 19px 20px, #f9f9f9 20px 39px, #e8e8e8 39px 40px); }
.hbar { height: 17px; flex: none; display: flex; background: #f0f0f0; }
.hbar button { width: 17px; display: flex; align-items: center; justify-content: center; }
.track { flex: 1; }
.thumb { width: 78%; height: 16px; background: #cdcdcd; }
.split { height: 6px; flex: none; border: 1px solid #a5a5a5; background: #dcdcdc; }
.fold { height: 24px; flex: none; display: flex; align-items: center; justify-content: space-between; padding: 1px 6px 0 7px; border-bottom: 2px solid #d0d0d0; font-size: 14px; color: #006487; }
.ch { width: 12px; height: 10px; }

/* graphics window */
.view { flex: 1; min-width: 0; display: flex; flex-direction: column; }
.doctabs { height: 23px; flex: none; border-bottom: 2px solid #549fb8; display: flex; }
.doctab { background: #549fb8; color: #fff; font-size: 12px; display: flex; align-items: center; gap: 5px; padding: 0 6px; }
.stage { flex: 1; min-height: 0; position: relative; overflow: hidden; background: linear-gradient(#b8b8b8, #d2d3d3 40%, #e4e5e7 75%, #e6e8ea); }
.scene { position: absolute; inset: 0; width: 100%; height: 100%; }
/* extruded lettering: each shadow step raises the body above the outlined base */
.solid {
  font: 500 80px "Noto Sans CJK SC", sans-serif; fill: #8a5c00; stroke: #ff9b45; stroke-width: 3px;
  filter: drop-shadow(0 -3px 0 #8a5c00) drop-shadow(0 -4px 0 #b98b00) drop-shadow(0 -4px 0 #cfa206) drop-shadow(0 -1px 0 #4a3a08);
}
.ax { font: 14px "Liberation Sans", sans-serif; }

.dialog { position: relative; width: 328px; background: #efefef; border-right: 1px solid #dcdcdc; border-bottom: 1px solid #d4d4d4; font-size: 12px; }
.dialog header { height: 24px; background: #549fb8; color: #fff; display: flex; align-items: center; padding: 0 8px 0 7px; gap: 8px; }
.dialog h2 { flex: 1; font-size: 14px; }
.dbody { padding: 4px 5px 9px 6px; display: flex; flex-direction: column; gap: 3px; }
fieldset { margin: 0; min-width: 0; border: 0; border-bottom: 1px solid #c2c2c2; background: #fff; padding: 0 9px 8px; display: flex; flex-direction: column; gap: 2px; }
.dh { height: 26px; margin: 0 -3px 2px -2px; display: flex; align-items: center; justify-content: space-between; font-size: 14px; color: #006487; }
.shut { padding-bottom: 0; }
.shut .dh { height: 23px; margin-bottom: 0; }
.row { display: flex; align-items: center; gap: 2px; }
.r32 { height: 32px; }
.r26 { height: 26px; }
.r25h { height: 25px; }
.lab { flex: 1; }
.pick { flex: 1; height: 32px; display: flex; align-items: center; gap: 6px; padding-left: 2px; margin-right: 2px; }
.hot { background: #ffdf76; }
.k24, .k32 { border: 1px solid #a8a8a8; background: #fff; display: flex; align-items: center; justify-content: center; flex: none; }
.k24 { width: 24px; height: 24px; }
.k32 { width: 32px; height: 32px; }
.dis { border-color: #ccc; }
.yel { background: #ffdf76; border-color: #ffdf76; }
.duo { display: flex; }
.kd { width: 18px; height: 32px; margin-left: -1px; border: 1px solid #a8a8a8; display: flex; align-items: center; justify-content: center; }
.dsel { width: 141px; height: 100%; border: 1px solid #a8a8a8; position: relative; display: flex; align-items: center; padding-left: 4px; background: #fff; }
.dsel::after { top: 10px; }
.dsel select { appearance: none; border: 0; background: none; flex: 1; min-width: 0; height: 22px; padding: 0 4px; outline: 0; }
.dsel input { border: 0; width: 70px; height: 20px; padding: 0; outline: 0; background: none; }
.dsel input.marked { width: 8px; height: 17px; background: #0078d7; color: #fff; margin-right: 62px; }
.num span { margin-left: 8px; }
.tick { height: 21px; gap: 5px; }
.tick input { width: 13px; height: 13px; }
.dialog footer { display: flex; justify-content: flex-end; gap: 5px; padding: 8px 10px 0 0; }
.dialog footer button { width: 54px; height: 25px; background: #dfdfdf; border: 1px solid #a8a8a8; }
.dialog footer .ok { background: #72b3c8; border-color: #72b3c8; color: #fff; }

.float { position: absolute; left: 916px; top: 251px; width: 162px; height: 33px; background: #f0f0f0; border: 1px solid #a5a5a5; display: flex; align-items: center; gap: 4px; padding-left: 3px; font-size: 12px; }
.grip { width: 8px; height: 26px; margin-right: 1px; background: radial-gradient(circle, #bbb 1px, transparent 2px) 0 0 / 4px 5px; }
.float button { width: 45px; height: 26px; border: 1px solid #aaa; background: #fff; display: flex; align-items: center; justify-content: space-around; }
.fin { width: 62px; height: 24px; border: 1px solid #aaa; background: #fff; display: flex; align-items: center; padding: 0 5px 0 4px; }
.fin input { flex: 1; min-width: 0; border: 0; padding: 0; height: 20px; outline: 0; }
.fin .dn, .float button .dn { border-width: 5px 4px 0; }

/* status line */
.status { height: 21px; flex: none; border-top: 1px solid #999; display: grid; grid-template-columns: 48.5% 1fr auto; align-items: center; padding: 0 54px 0 3px; line-height: 18px; }
.status strong { font-weight: 500; color: #000; }
.sicons { display: flex; gap: 4px; }
.grayed { background: #ddd; }

/* system overlays */
.corner { position: absolute; right: 280px; bottom: 0; width: 153px; height: 70px; overflow: hidden; }
.gauge { position: absolute; left: 7px; top: 0; width: 70px; height: 70px; fill: #333; font-family: Roboto, sans-serif; font-weight: 300; }
.ime { position: absolute; left: 4px; right: 0; bottom: 0; height: 25px; background: #fff; border: 1px solid #b3cbe6; border-bottom: 0; display: flex; align-items: center; gap: 8px; padding-left: 32px; }
.sogou { position: absolute; left: -4px; bottom: -2px; width: 31px; height: 30px; }
.zh { width: 16px; text-align: center; font-size: 15px; font-weight: 700; color: #0a6ad8; }
.mark { position: absolute; right: 8px; bottom: 8px; font: 16px/20px "Liberation Sans", sans-serif; color: #fff; text-shadow: 1px 1px 1px #bbb, 0 0 1px #ccc; opacity: .8; }
```
